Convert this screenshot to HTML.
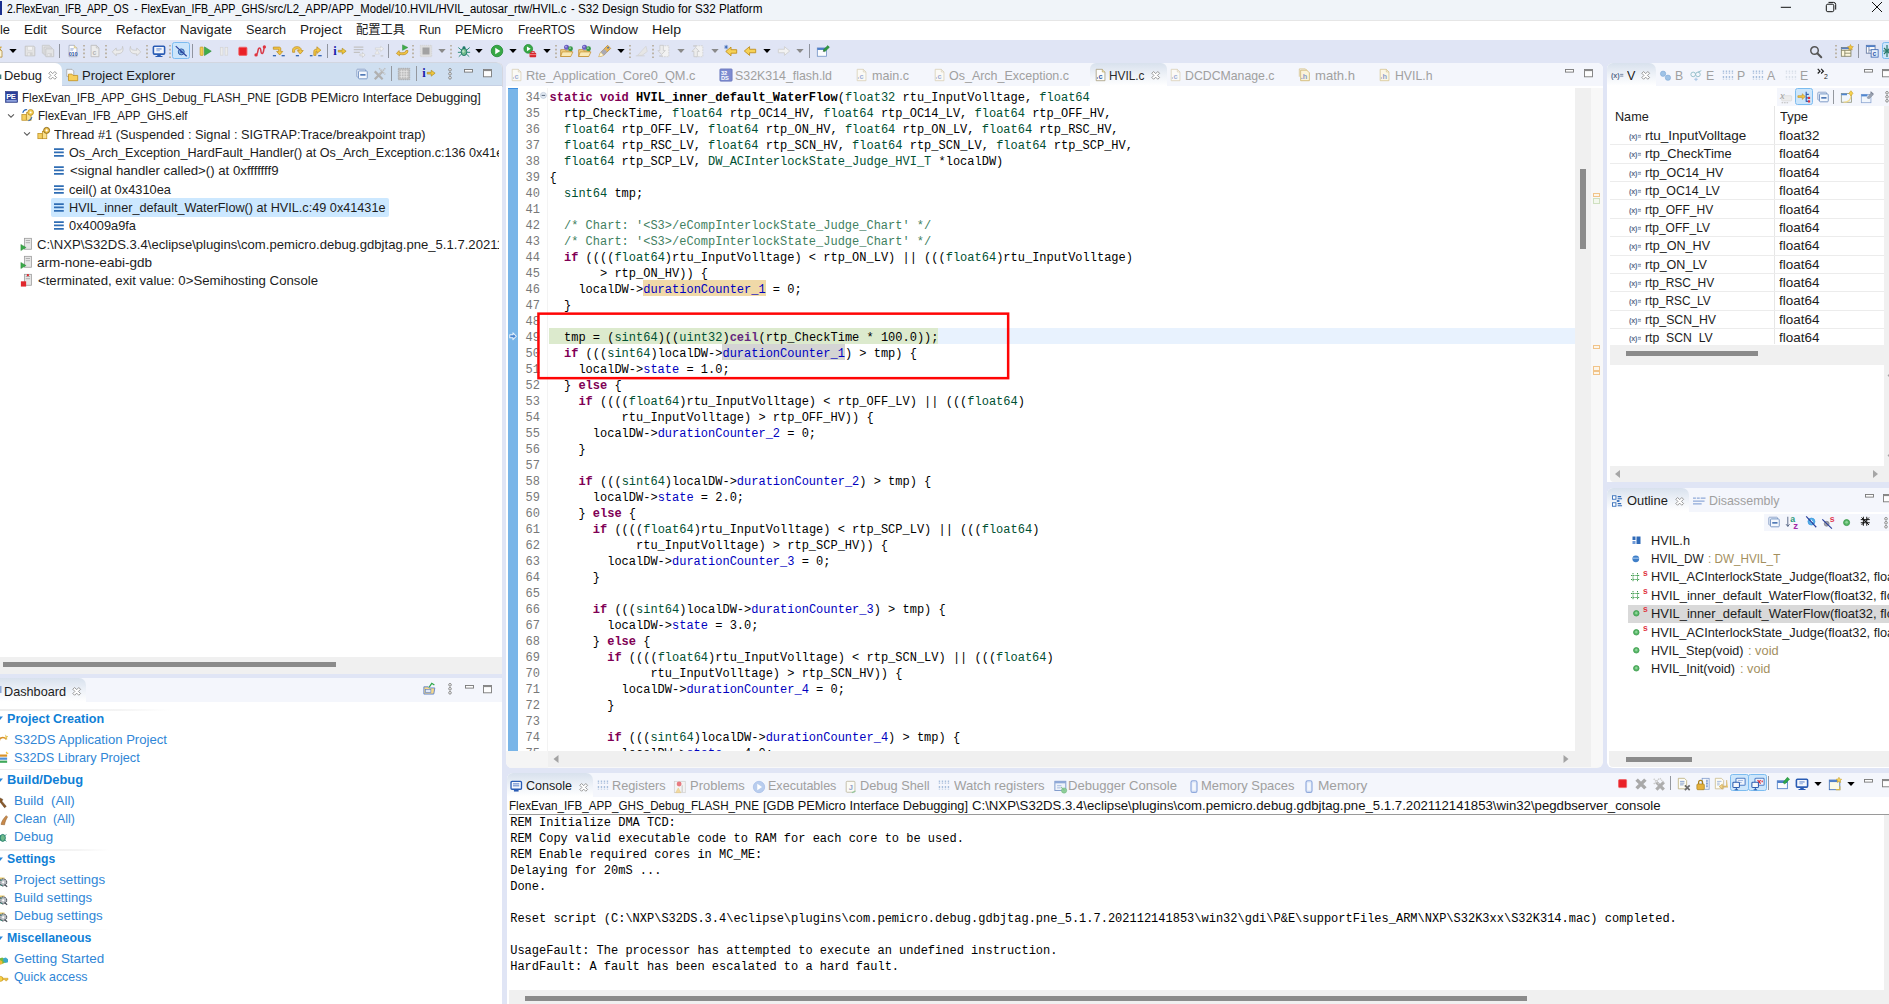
<!DOCTYPE html>
<html><head><meta charset="utf-8"><title>S32 Design Studio</title>
<style>
html,body{margin:0;padding:0;}
body{width:1889px;height:1004px;overflow:hidden;position:relative;background:#e0e5f5;}
body>div,body>span,body>svg{position:absolute;}
div{box-sizing:border-box;}
span.u{font-family:"Liberation Sans","Noto Sans CJK SC",sans-serif;white-space:pre;transform-origin:0 0;}
span.m{font-family:"Liberation Mono",monospace;white-space:pre;transform-origin:0 0;}
svg{overflow:visible;}

</style></head><body>
<div style="left:0px;top:0px;width:1889px;height:20.2px;background:#f0f4f9;"></div>
<div style="left:0px;top:20.2px;width:1889px;height:0.8px;background:#e6e6e6;"></div>
<div style="left:0px;top:21px;width:1889px;height:18.5px;background:#ffffff;"></div>
<div style="left:0px;top:39.5px;width:1889px;height:964.5px;background:#e0e5f5;"></div>
<div style="left:0px;top:1px;width:1.5px;height:14px;background:#1a2f8f;"></div>
<span class="u" style="left:7px;top:0.74px;font-size:12.3px;line-height:16px;color:#000;transform:scaleX(0.8471);">2.FlexEvan_IFB_APP_OS</span>
<span class="u" style="left:133.6px;top:0.74px;font-size:12.3px;line-height:16px;color:#000;transform:scaleX(0.9000);">-</span>
<span class="u" style="left:140.7px;top:0.74px;font-size:12.3px;line-height:16px;color:#000;transform:scaleX(0.8694);">FlexEvan_IFB_APP_GHS</span>
<span class="u" style="left:264.6px;top:0.74px;font-size:12.3px;line-height:16px;color:#000;transform:scaleX(0.9225);">/src/L2_APP/APP_Model/10.HVIL/HVIL_autosar_rtw/HVIL.c</span>
<span class="u" style="left:570.6px;top:0.74px;font-size:12.3px;line-height:16px;color:#000;transform:scaleX(0.9000);">-</span>
<span class="u" style="left:578px;top:0.74px;font-size:12.3px;line-height:16px;color:#000;transform:scaleX(0.9504);">S32 Design Studio for S32 Platform</span>
<svg style="left:1775px;top:0px;" width="20" height="20" viewBox="0 0 20 20"><path d="M5.800 7.300H16" stroke="#111" stroke-width="1" fill="none"/></svg>
<svg style="left:1820px;top:0px;" width="20" height="20" viewBox="0 0 20 20"><rect x="6.300" y="4.200" width="7.500" height="7.500" rx="1.500" stroke="#111" stroke-width="1" fill="none"/><path d="M8.500 2.400h5a2.200 2.200 0 0 1 2.200 2.200v5" stroke="#111" stroke-width="1" fill="none"/></svg>
<svg style="left:1865px;top:0px;" width="20" height="20" viewBox="0 0 20 20"><path d="M7 2L17 12M17 2L7 12" stroke="#111" stroke-width="1" fill="none"/></svg>
<span class="u" style="left:0px;top:20.86px;font-size:13.4px;line-height:17px;color:#1a1a1a;transform:scaleX(0.9581);">le</span>
<span class="u" style="left:24px;top:20.86px;font-size:13.4px;line-height:17px;color:#1a1a1a;transform:scaleX(0.9966);">Edit</span>
<span class="u" style="left:61px;top:20.86px;font-size:13.4px;line-height:17px;color:#1a1a1a;transform:scaleX(0.9661);">Source</span>
<span class="u" style="left:116px;top:20.86px;font-size:13.4px;line-height:17px;color:#1a1a1a;transform:scaleX(0.9880);">Refactor</span>
<span class="u" style="left:180px;top:20.86px;font-size:13.4px;line-height:17px;color:#1a1a1a;transform:scaleX(0.9837);">Navigate</span>
<span class="u" style="left:246px;top:20.86px;font-size:13.4px;line-height:17px;color:#1a1a1a;transform:scaleX(0.9426);">Search</span>
<span class="u" style="left:300px;top:20.86px;font-size:13.4px;line-height:17px;color:#1a1a1a;transform:scaleX(1.0075);">Project</span>
<span class="u" style="left:419px;top:20.86px;font-size:13.4px;line-height:17px;color:#1a1a1a;transform:scaleX(0.8951);">Run</span>
<span class="u" style="left:455px;top:20.86px;font-size:13.4px;line-height:17px;color:#1a1a1a;transform:scaleX(0.9484);">PEMicro</span>
<span class="u" style="left:518px;top:20.86px;font-size:13.4px;line-height:17px;color:#1a1a1a;transform:scaleX(0.8872);">FreeRTOS</span>
<span class="u" style="left:590px;top:20.86px;font-size:13.4px;line-height:17px;color:#1a1a1a;transform:scaleX(1.0075);">Window</span>
<span class="u" style="left:652px;top:20.86px;font-size:13.4px;line-height:17px;color:#1a1a1a;transform:scaleX(1.0528);">Help</span>
<span class="u" style="left:356px;top:21.77px;font-size:12.2px;line-height:16px;color:#1a1a1a;transform:scaleX(1.0051);">配置工具</span>
<div style="left:172px;top:42px;width:18px;height:17.3px;background:#cde6fb;border:1px solid #7cbcf0;border-radius:2.5px;"></div>
<svg style="left:174.0px;top:44px;" width="14.0" height="14.0" viewBox="0 0 16 16"><circle cx="8.300" cy="9" r="3.400" fill="#7fb0e0" stroke="#2c5aa8" stroke-width="1.100"/><circle cx="8.300" cy="9" r="1.300" fill="#2c5aa8"/><path d="M2 2.500L14.500 14" stroke="#2a3f9a" stroke-width="1.300"/></svg>
<svg style="left:-5.5px;top:44px;" width="14.0" height="14.0" viewBox="0 0 16 16"><path d="M-3 5h8l3 3v7H-3z" fill="#fdf6d8" stroke="#b08a3a" stroke-width=".9"/><path d="M4 1l1 2.300l2.500 .2l-1.900 1.600l.6 2.400L4 6.200" fill="#f3c644" stroke="#b98a1c" stroke-width=".6"/></svg>
<svg style="left:22.7px;top:44px;" width="14.0" height="14.0" viewBox="0 0 16 16"><path d="M2.5 2.5h10l1 1v10h-11z" fill="#e4e4e4" stroke="#c2c2c2"/><rect x="5" y="3" width="6" height="4" fill="#f4f4f4" stroke="#cfcfcf" stroke-width=".6"/><rect x="5" y="9.5" width="6" height="4" fill="#d2d2d2"/><rect x="6" y="10.5" width="1.6" height="2.5" fill="#f2f2f2"/></svg>
<svg style="left:41.0px;top:44px;" width="14.0" height="14.0" viewBox="0 0 16 16"><g opacity=".9"><path d="M1.5 1.5h8l1 1v8h-9z" fill="#e6e6e6" stroke="#c6c6c6"/><path d="M3.5 3.5h8l1 1v8h-9z" fill="#e6e6e6" stroke="#c6c6c6"/><path d="M5.5 5.5h8l1 1v8h-9z" fill="#e4e4e4" stroke="#c2c2c2"/><rect x="7.5" y="10.5" width="5" height="3.5" fill="#d0d0d0"/><rect x="8.3" y="11.3" width="1.4" height="2.3" fill="#f2f2f2"/></g></svg>
<svg style="left:65.9px;top:44px;" width="14.0" height="14.0" viewBox="0 0 16 16"><path d="M3.5 1.5h6l3 3v10h-9z" fill="#fdfdfd" stroke="#9fa8bd" stroke-width=".9"/><path d="M9.5 1.5v3h3" fill="#f3e6b8" stroke="#c9b36a" stroke-width=".7"/><path d="M5 5.5h4M5 7h3" stroke="#7a94c8" stroke-width=".8"/><text x="3.2" y="13.4" font-size="6.3" font-family="Liberation Sans,sans-serif" font-weight="700" fill="#2b4fa0" letter-spacing="-.3">010</text></svg>
<svg style="left:87.9px;top:44px;" width="14.0" height="14.0" viewBox="0 0 16 16"><path d="M3.5 1.5h6l3 3v10h-9z" fill="#ececec" stroke="#bdbdbd"/><path d="M9.5 1.5v3h3" fill="none" stroke="#bdbdbd" stroke-width=".8"/><text x="5" y="12.6" font-size="8" font-family="Liberation Sans,sans-serif" font-weight="700" fill="#b6b6b6">c</text></svg>
<svg style="left:110.6px;top:44px;" width="14.0" height="14.0" viewBox="0 0 16 16"><path d="M1.5 9L6 4.5v2.6c4 0 7 .2 7.2-4.4C15.5 10 10.500 11.500 6 11.200v2.300z" fill="#ececec" stroke="#c4c4c4" stroke-width=".9" stroke-linejoin="round"/></svg>
<svg style="left:128.0px;top:44px;" width="14.0" height="14.0" viewBox="0 0 16 16"><path d="M14.5 9L10 4.5v2.6c-4 0-7 .2-7.2-4.4C.5 10 5.500 11.500 10 11.200v2.300z" fill="#ececec" stroke="#c4c4c4" stroke-width=".9" stroke-linejoin="round"/></svg>
<svg style="left:151.5px;top:44px;" width="14.0" height="14.0" viewBox="0 0 16 16"><rect x="1.600" y="2.600" width="12.800" height="9" rx="1.200" fill="#f4f7fc" stroke="#2a5cb4" stroke-width="1.800"/><rect x="5" y="5" width="6" height="1.300" fill="#6a8fd0"/><rect x="5" y="7" width="4" height="1.300" fill="#9db6e2"/><path d="M6 12.300h4v1.300h2v1.200H4v-1.200h2z" fill="#2a5cb4"/></svg>
<svg style="left:198.6px;top:44px;" width="14.0" height="14.0" viewBox="0 0 16 16"><rect x="1.300" y="3.500" width="3.400" height="9.500" rx=".6" fill="#f2cd52" stroke="#c39a22" stroke-width=".8"/><path d="M6.300 3.300L14 8.200L6.300 13.200Z" fill="#3fae49" stroke="#2b8a35" stroke-width=".7" stroke-linejoin="round"/></svg>
<svg style="left:217.0px;top:44px;" width="14.0" height="14.0" viewBox="0 0 16 16"><rect x="3.800" y="3.800" width="3" height="9" fill="#ececec" stroke="#d4d4d4" stroke-width=".8"/><rect x="9.200" y="3.800" width="3" height="9" fill="#ececec" stroke="#d4d4d4" stroke-width=".8"/></svg>
<svg style="left:235.6px;top:44px;" width="14.0" height="14.0" viewBox="0 0 16 16"><rect x="3.200" y="3.700" width="9.300" height="9.300" rx="1" fill="#ea2127" stroke="#f0666a" stroke-width="1"/></svg>
<svg style="left:253.4px;top:44px;" width="14.0" height="14.0" viewBox="0 0 16 16"><path d="M4 12.500C6.500 9 5 4.500 7.500 4.500C10 4.500 8 11 10.500 11C12.500 10.500 12 6 13 3.500" fill="none" stroke="#d83a48" stroke-width="1.700"/><circle cx="3.500" cy="12.500" r="1.900" fill="#e0343f"/><circle cx="13" cy="3.300" r="1.900" fill="#e0343f"/></svg>
<svg style="left:272.4px;top:44px;" width="14.0" height="14.0" viewBox="0 0 16 16"><path d="M1.500 3.500h6.500c1.500 0 2 .8 2 2v3h2.300L8.800 12.600L5.300 8.500h2.300v-2.500h-6.100z" fill="#f3c644" stroke="#b98a1c" stroke-width=".8" stroke-linejoin="round"/><rect x="1" y="12.600" width="3.600" height="1.500" fill="#3465b4"/><rect x="11" y="12.600" width="3.600" height="1.500" fill="#3465b4"/></svg>
<svg style="left:291.0px;top:44px;" width="14.0" height="14.0" viewBox="0 0 16 16"><path d="M1.800 9.500v-2.500c0-2.500 2-4 5-4c3 0 5 1.500 5 4v.5h2.200L10.600 11.500L7.200 7.500h2.200c0-1.300-1-2-2.600-2c-1.600 0-2.600 .800-2.600 2v2z" fill="#f3c644" stroke="#b98a1c" stroke-width=".8" stroke-linejoin="round"/><rect x="5.500" y="12.600" width="3.600" height="1.500" fill="#3465b4"/></svg>
<svg style="left:309.0px;top:44px;" width="14.0" height="14.0" viewBox="0 0 16 16"><path d="M5.500 13v-4.500c0-1.500 1-2.500 2.500-2.500h1v-2.800L13.600 7L9 10.800v-2.600h-1v4.800z" fill="#f3c644" stroke="#b98a1c" stroke-width=".8" stroke-linejoin="round"/><rect x="1" y="12.600" width="3" height="1.500" fill="#3465b4"/><rect x="10.500" y="12.600" width="4" height="1.500" fill="#3465b4"/></svg>
<svg style="left:333.0px;top:44px;" width="14.0" height="14.0" viewBox="0 0 16 16"><text x=".3" y="13" font-size="14" font-family="Liberation Serif,serif" font-weight="700" fill="#1a1aa8">i</text><path d="M6 7.200h4.500v-2.400L15 8.200L10.500 11.600v-2.400H6z" fill="#f0c63c" stroke="#a88516" stroke-width=".7" stroke-linejoin="round"/></svg>
<svg style="left:352.0px;top:44px;" width="14.0" height="14.0" viewBox="0 0 16 16"><path d="M2 3.500h11M2 6.500h11M2 9.500h7" stroke="#c2c2c2" stroke-width="1.400"/><path d="M9 11.500h3v-1.800l3 2.800l-3 2.800v-1.800h-3z" fill="#f0f0f0" stroke="#c6c6c6" stroke-width=".7"/></svg>
<svg style="left:370.5px;top:44px;" width="14.0" height="14.0" viewBox="0 0 16 16"><path d="M5 4.500h6v-2l3.500 3l-3.500 3v-2H5z" fill="#f2f2f2" stroke="#cdcdcd" stroke-width=".7"/><path d="M7 6.500l2.500 5h-5z" fill="#eee" stroke="#d0d0d0" stroke-width=".6"/><path d="M1.500 13.500h3M11 13.500h3" stroke="#c6c6c6" stroke-width="1.300"/></svg>
<svg style="left:395.8px;top:44px;" width="14.0" height="14.0" viewBox="0 0 16 16"><path d="M3.500 7.500l-3 3.300l3.600 2.700v-1.700c5 1.200 9.500 .3 9.600-4.300h-2.400c-.2 2.600-3.400 2.900-7.400 2.300z" fill="#f3c644" stroke="#b98a1c" stroke-width=".8" stroke-linejoin="round"/><path d="M7.500 1L13.500 4L7.500 7.200Z" fill="#3fae49" stroke="#2b8a35" stroke-width=".6"/></svg>
<svg style="left:418.5px;top:44px;" width="14.0" height="14.0" viewBox="0 0 16 16"><rect x="1.500" y="1.500" width="13" height="13" fill="#dedede" stroke="#d0d0d0" stroke-dasharray="1.200 1"/><rect x="4" y="4" width="8" height="8" fill="#a2a2a2"/></svg>
<svg style="left:456.6px;top:44px;" width="14.0" height="14.0" viewBox="0 0 16 16"><ellipse cx="8" cy="9" rx="3.300" ry="4.200" fill="#6fb98a" stroke="#1f7a6a" stroke-width="1.100"/><circle cx="8" cy="4.300" r="1.700" fill="#1f7a6a"/><path d="M1.500 4l3.500 3M14.500 4l-3.500 3M1 9.500h3.700M15 9.500h-3.700M2 14.500l3.200-3M14 14.500l-3.200-3" stroke="#2a8a78" stroke-width="1.100"/><ellipse cx="7.300" cy="8.300" rx="1.300" ry="1.800" fill="#c9ecd2" opacity=".8"/></svg>
<svg style="left:489.5px;top:44px;" width="14.0" height="14.0" viewBox="0 0 16 16"><circle cx="8" cy="8" r="6.600" fill="#37a845" stroke="#1f8a32" stroke-width=".9"/><path d="M6 4.300L11.800 8L6 11.700Z" fill="#fff"/></svg>
<svg style="left:523.2px;top:44px;" width="14.0" height="14.0" viewBox="0 0 16 16"><circle cx="6" cy="5.500" r="5" fill="#37a845" stroke="#1f8a32" stroke-width=".8"/><path d="M4.500 2.800L8.800 5.500L4.500 8.200Z" fill="#fff"/><rect x="7.500" y="10" width="7.500" height="5" rx=".8" fill="#d8252b"/><path d="M9.500 10v-1.300h3.500v1.300" fill="none" stroke="#d8252b" stroke-width="1.100"/><rect x="7.500" y="11.800" width="7.500" height=".9" fill="#f3a0a3"/></svg>
<svg style="left:559.8px;top:44px;" width="14.0" height="14.0" viewBox="0 0 16 16"><path d="M.8 6.500h5l1 1.300h6.500l-1.500 6.500H.8z" fill="#f6d88a" stroke="#c08a2a" stroke-width=".9" stroke-linejoin="round"/><path d="M2.500 9h12.300l-2.500 5.300H.8z" fill="#fae9b5" stroke="#c08a2a" stroke-width=".8" stroke-linejoin="round"/><circle cx="7.500" cy="3.800" r="2.900" fill="#6a5fc0"/><circle cx="6.800" cy="3" r="1" fill="#b5aee8"/><circle cx="12" cy="5.500" r="2.800" fill="#3a9a4a"/><circle cx="11.400" cy="4.700" r="1" fill="#a5dcae"/></svg>
<svg style="left:578.3px;top:44px;" width="14.0" height="14.0" viewBox="0 0 16 16"><path d="M.8 6.500h5l1 1.300h6.500l-1.500 6.500H.8z" fill="#f6d88a" stroke="#c08a2a" stroke-width=".9" stroke-linejoin="round"/><path d="M2.500 9h12.300l-2.500 5.300H.8z" fill="#fae9b5" stroke="#c08a2a" stroke-width=".8" stroke-linejoin="round"/><circle cx="7.500" cy="3.800" r="2.900" fill="#6a5fc0"/><circle cx="6.800" cy="3" r="1" fill="#b5aee8"/><circle cx="12" cy="5.500" r="2.800" fill="#3a9a4a"/><circle cx="11.400" cy="4.700" r="1" fill="#a5dcae"/></svg>
<svg style="left:597.5px;top:44px;" width="14.0" height="14.0" viewBox="0 0 16 16"><path d="M1 14.500l2-5L11 1.500l3.500 3.500L6.500 13z" fill="#e8b85a" stroke="#b5852a" stroke-width=".8" stroke-linejoin="round"/><path d="M3 9.500l4-4l3.500 3.500l-4 4z" fill="#a9a9b5"/><path d="M1 14.500l2-5l3.500 3.500z" fill="#fff8dc" stroke="#d8c27a" stroke-width=".5"/><circle cx="11.500" cy="4.200" r="1" fill="#3a6ab8"/></svg>
<svg style="left:634.6px;top:44px;" width="14.0" height="14.0" viewBox="0 0 16 16"><path d="M1 13.500h10" stroke="#d0d0d0" stroke-width="1"/><path d="M3 13L12.500 2.500l1.500 6L8 13z" fill="#e6e6e6" stroke="#cfcfcf" stroke-width=".7"/></svg>
<svg style="left:657.3px;top:44px;" width="14.0" height="14.0" viewBox="0 0 16 16"><path d="M5.500 2h8v12.500h-8" fill="#f2f2f2" stroke="#cccccc" stroke-width=".8" stroke-dasharray="2 1"/><path d="M3.300 1.500h4v6h2.200L5.300 12L1.100 7.500h2.200z" fill="#ececec" stroke="#c4c4c4" stroke-width=".8" stroke-linejoin="round"/><rect x="2.500" y="13" width="4" height="1.500" fill="#c8c8c8"/></svg>
<svg style="left:691.3px;top:44px;" width="14.0" height="14.0" viewBox="0 0 16 16"><path d="M5.500 2h8v12.500h-8" fill="#f2f2f2" stroke="#cccccc" stroke-width=".8" stroke-dasharray="2 1"/><path d="M3.300 14.500h4v-6h2.200L5.300 4L1.100 8.500h2.200z" fill="#ececec" stroke="#c4c4c4" stroke-width=".8" stroke-linejoin="round"/><rect x="2.500" y="1.500" width="4" height="1.500" fill="#c8c8c8"/></svg>
<svg style="left:724.4px;top:44px;" width="14.0" height="14.0" viewBox="0 0 16 16"><path d="M2 8.500L8 3.500v3h6.500v4H8v3z" fill="#f6d257" stroke="#c08f1c" stroke-width="1" stroke-linejoin="round"/><path d="M2.500 1v5M.3 3.500h4.500M1 1.800l3 3.400M4 1.800l-3 3.400" stroke="#2f5fb0" stroke-width=".8"/></svg>
<svg style="left:742.7px;top:44px;" width="14.0" height="14.0" viewBox="0 0 16 16"><path d="M1.500 8L7.500 3v3h7v4h-7v3z" fill="#f6d257" stroke="#c08f1c" stroke-width="1" stroke-linejoin="round"/></svg>
<svg style="left:776.7px;top:44px;" width="14.0" height="14.0" viewBox="0 0 16 16"><path d="M14.500 8L8.500 3v3h-7v4h7v3z" fill="#f2f2f2" stroke="#cfcfcf" stroke-width="1" stroke-linejoin="round"/></svg>
<svg style="left:816.0px;top:44px;" width="14.0" height="14.0" viewBox="0 0 16 16"><rect x="1.500" y="4.500" width="10.500" height="9.500" fill="#fbfcfe" stroke="#6d8fc4" stroke-width=".9"/><rect x="1.500" y="4.500" width="10.500" height="2.300" fill="#4f7fc8"/><path d="M8 7l5.500-5.200l1.800 2L10 8.800z" fill="#2f9a3f" stroke="#1f7a2f" stroke-width=".6"/><path d="M8 9l1.500-1.500" stroke="#444" stroke-width=".9"/></svg>
<div style="left:59.0px;top:44px;width:1.2px;height:14px;background:#90949f;"></div>
<div style="left:191.70000000000002px;top:44px;width:1.2px;height:14px;background:#90949f;"></div>
<div style="left:326.9px;top:44px;width:1.2px;height:14px;background:#90949f;"></div>
<div style="left:388.09999999999997px;top:44px;width:1.2px;height:14px;background:#90949f;"></div>
<div style="left:808.9px;top:44px;width:1.2px;height:14px;background:#90949f;"></div>
<svg style="left:83px;top:45px;" width="2" height="13" viewBox="0 0 2 13"><path d="M1 0V13" stroke="#b0a48e" stroke-width="1.5" stroke-dasharray="1.6 2.2"/></svg>
<svg style="left:105.2px;top:45px;" width="2" height="13" viewBox="0 0 2 13"><path d="M1 0V13" stroke="#b0a48e" stroke-width="1.5" stroke-dasharray="1.6 2.2"/></svg>
<svg style="left:146px;top:45px;" width="2" height="13" viewBox="0 0 2 13"><path d="M1 0V13" stroke="#b0a48e" stroke-width="1.5" stroke-dasharray="1.6 2.2"/></svg>
<svg style="left:168.5px;top:45px;" width="2" height="13" viewBox="0 0 2 13"><path d="M1 0V13" stroke="#b0a48e" stroke-width="1.5" stroke-dasharray="1.6 2.2"/></svg>
<svg style="left:412.3px;top:45px;" width="2" height="13" viewBox="0 0 2 13"><path d="M1 0V13" stroke="#b0a48e" stroke-width="1.5" stroke-dasharray="1.6 2.2"/></svg>
<svg style="left:450px;top:45px;" width="2" height="13" viewBox="0 0 2 13"><path d="M1 0V13" stroke="#b0a48e" stroke-width="1.5" stroke-dasharray="1.6 2.2"/></svg>
<svg style="left:555px;top:45px;" width="2" height="13" viewBox="0 0 2 13"><path d="M1 0V13" stroke="#b0a48e" stroke-width="1.5" stroke-dasharray="1.6 2.2"/></svg>
<svg style="left:629.2px;top:45px;" width="2" height="13" viewBox="0 0 2 13"><path d="M1 0V13" stroke="#b0a48e" stroke-width="1.5" stroke-dasharray="1.6 2.2"/></svg>
<svg style="left:651.6px;top:45px;" width="2" height="13" viewBox="0 0 2 13"><path d="M1 0V13" stroke="#b0a48e" stroke-width="1.5" stroke-dasharray="1.6 2.2"/></svg>
<svg style="left:8.8px;top:48.3px;" width="8" height="6" viewBox="0 0 8 6"><path d="M0.2999999999999998 0.8999999999999999H7.7L4 5.1Z" fill="#000"/></svg>
<svg style="left:437.8px;top:48.3px;" width="8" height="6" viewBox="0 0 8 6"><path d="M0.2999999999999998 0.8999999999999999H7.7L4 5.1Z" fill="#8a8a8a"/></svg>
<svg style="left:475.4px;top:48.3px;" width="8" height="6" viewBox="0 0 8 6"><path d="M0.2999999999999998 0.8999999999999999H7.7L4 5.1Z" fill="#000"/></svg>
<svg style="left:508.9px;top:48.3px;" width="8" height="6" viewBox="0 0 8 6"><path d="M0.2999999999999998 0.8999999999999999H7.7L4 5.1Z" fill="#000"/></svg>
<svg style="left:542.7px;top:48.3px;" width="8" height="6" viewBox="0 0 8 6"><path d="M0.2999999999999998 0.8999999999999999H7.7L4 5.1Z" fill="#000"/></svg>
<svg style="left:617px;top:48.3px;" width="8" height="6" viewBox="0 0 8 6"><path d="M0.2999999999999998 0.8999999999999999H7.7L4 5.1Z" fill="#000"/></svg>
<svg style="left:676.8px;top:48.3px;" width="8" height="6" viewBox="0 0 8 6"><path d="M0.2999999999999998 0.8999999999999999H7.7L4 5.1Z" fill="#8a8a8a"/></svg>
<svg style="left:710.6px;top:48.3px;" width="8" height="6" viewBox="0 0 8 6"><path d="M0.2999999999999998 0.8999999999999999H7.7L4 5.1Z" fill="#8a8a8a"/></svg>
<svg style="left:762.6px;top:48.3px;" width="8" height="6" viewBox="0 0 8 6"><path d="M0.2999999999999998 0.8999999999999999H7.7L4 5.1Z" fill="#000"/></svg>
<svg style="left:796.2px;top:48.3px;" width="8" height="6" viewBox="0 0 8 6"><path d="M0.2999999999999998 0.8999999999999999H7.7L4 5.1Z" fill="#8a8a8a"/></svg>
<svg style="left:1809.2px;top:44.5px;" width="14.0" height="14.0" viewBox="0 0 16 16"><circle cx="6.300" cy="6.300" r="4.300" fill="none" stroke="#555" stroke-width="1.700"/><path d="M9.500 9.500L14 14" stroke="#555" stroke-width="2.300" stroke-linecap="round"/></svg>
<svg style="left:1834.7px;top:45px;" width="2" height="13" viewBox="0 0 2 13"><path d="M1 0V13" stroke="#b0a48e" stroke-width="1.5" stroke-dasharray="1.6 2.2"/></svg>
<svg style="left:1840px;top:44px;" width="14.0" height="14.0" viewBox="0 0 16 16"><rect x="1.500" y="4" width="11" height="10" fill="#fdf7dc" stroke="#7a7a5a" stroke-width=".9"/><path d="M1.500 7.300h11M5.500 7.300v6.700M5.500 10.500h7" stroke="#7a7a5a" stroke-width=".9"/><rect x="1.500" y="4" width="11" height="2" fill="#5a7fc0"/><path d="M12 .5l1 2.200l2.300 .3l-1.700 1.600l.4 2.300L12 5.800L10 6.900l.4-2.300L8.700 3l2.300-.3z" fill="#f5c73d" stroke="#b98a1c" stroke-width=".5"/></svg>
<div style="left:1858.0px;top:44px;width:1.2px;height:14px;background:#90949f;"></div>
<svg style="left:1865.2px;top:44px;" width="14.0" height="14.0" viewBox="0 0 16 16"><rect x="1.500" y="1.500" width="10" height="9" fill="#fdfdfd" stroke="#5a6f9a" stroke-width=".9"/><rect x="1.500" y="1.500" width="10" height="2" fill="#4f7fc8"/><path d="M4.500 3.500v7M4.500 7h7" stroke="#5a6f9a" stroke-width=".8"/><rect x="7" y="6.500" width="8" height="8.500" fill="#e9f0fb" stroke="#2f5fb0" stroke-width=".9"/><text x="8.700" y="13.800" font-size="8" font-family="Liberation Sans,sans-serif" font-weight="700" fill="#2f5fb0">c</text></svg>
<div style="left:1881.6px;top:42px;width:13.4px;height:17.3px;background:#cde6fb;border:1px solid #7cbcf0;border-radius:2.5px;"></div>
<svg style="left:1884px;top:43px;" width="16" height="16" viewBox="0 0 16 16"><path d="M3 2v12M0 5l6 6M6 5l-6 6M-1 8h8" stroke="#2a7a6a" stroke-width="1.200"/></svg>
<div style="left:0px;top:62.3px;width:502.6px;height:611.7px;background:#ffffff;border-radius:0 6px 0 0;border-right:1px solid #d4d7e0;"></div>
<div style="left:0px;top:62.3px;width:502.4px;height:23.9px;background:#cfdff0;border-radius:0 6px 0 0;border-top:1px solid #d2d6e0;border-bottom:1px solid #c5d0e4;"></div>
<div style="left:0px;top:62.5px;width:62px;height:24.0px;background:#ffffff;border-radius:0 7px 0 0;"></div>
<span class="u" style="left:4px;top:66.93px;font-size:13.2px;line-height:17px;color:#1c1c1c;transform:scaleX(0.9775);">Debug</span>
<span class="u" style="left:82px;top:66.93px;font-size:13.2px;line-height:17px;color:#1c1c1c;transform:scaleX(0.9912);">Project Explorer</span>
<div style="left:51px;top:198.2px;width:338.2px;height:18.7px;background:#cce8ff;border-radius:2px;"></div>
<span class="u" style="left:22px;top:89.83px;font-size:12.6px;line-height:16px;color:#1c1c1c;transform:scaleX(0.9215);">FlexEvan_IFB_APP_GHS_Debug_FLASH_PNE</span>
<span class="u" style="left:275.6px;top:89.83px;font-size:12.6px;line-height:16px;color:#1c1c1c;transform:scaleX(1.0129);">[GDB PEMicro Interface Debugging]</span>
<span class="u" style="left:38px;top:108.18px;font-size:12.6px;line-height:16px;color:#1c1c1c;transform:scaleX(0.9206);">FlexEvan_IFB_APP_GHS.elf</span>
<span class="u" style="left:54px;top:126.53px;font-size:12.6px;line-height:16px;color:#1c1c1c;transform:scaleX(1.0121);">Thread #1 (Suspended : Signal : SIGTRAP:Trace/breakpoint trap)</span>
<span class="u" style="left:69px;top:144.88px;font-size:12.6px;line-height:16px;color:#1c1c1c;transform:scaleX(1.0007);">Os_Arch_Exception_HardFault_Handler() at Os_Arch_Exception.c:136 0x41e8c2</span>
<span class="u" style="left:70px;top:163.23px;font-size:12.6px;line-height:16px;color:#1c1c1c;transform:scaleX(1.0485);">&lt;signal handler called&gt;() at 0xfffffff9</span>
<span class="u" style="left:69px;top:181.58px;font-size:12.6px;line-height:16px;color:#1c1c1c;transform:scaleX(1.0187);">ceil() at 0x4310ea</span>
<span class="u" style="left:69px;top:199.93px;font-size:12.6px;line-height:16px;color:#1c1c1c;transform:scaleX(1.0062);">HVIL_inner_default_WaterFlow() at HVIL.c:49 0x41431e</span>
<span class="u" style="left:69px;top:218.28px;font-size:12.6px;line-height:16px;color:#1c1c1c;transform:scaleX(1.0176);">0x4009a9fa</span>
<span class="u" style="left:37px;top:236.63px;font-size:12.6px;line-height:16px;color:#1c1c1c;transform:scaleX(1.0408);">C:\NXP\S32DS.3.4\eclipse\plugins\com.pemicro.debug.gdbjtag.pne_5.1.7.202112141853\win32\pegdbserver_console</span>
<span class="u" style="left:37px;top:254.98px;font-size:12.6px;line-height:16px;color:#1c1c1c;transform:scaleX(1.0737);">arm-none-eabi-gdb</span>
<span class="u" style="left:38px;top:273.33px;font-size:12.6px;line-height:16px;color:#1c1c1c;transform:scaleX(1.0470);">&lt;terminated, exit value: 0&gt;Semihosting Console</span>
<div style="left:498.5px;top:86.5px;width:3.5px;height:569.5px;background:#ffffff;"></div>
<div style="left:502px;top:86.5px;width:4.5px;height:587.5px;background:#e0e5f5;"></div>
<div style="left:0px;top:656.5px;width:502px;height:17.5px;background:#f0f0f0;"></div>
<div style="left:3px;top:662px;width:333px;height:5px;background:#8b8b8b;"></div>
<svg style="left:48.1px;top:70.8px;" width="9.4" height="8.8" viewBox="0 0 10 10"><path d="M.6 2.600L2.600 .6L5 3L7.400 .6L9.400 2.600L7 5L9.400 7.400L7.400 9.400L5 7L2.600 9.400L.6 7.400L3 5Z" fill="#ffffff" stroke="#858585" stroke-width=".95" stroke-linejoin="round"/></svg>
<svg style="left:65px;top:67.5px;" width="14.0" height="14.0" viewBox="0 0 16 16"><path d="M2 1.500h6l2 2v6H2z" fill="#fbfbfb" stroke="#9a9a9a" stroke-width=".8"/><path d="M4 7h4l1.200 1.500h5.300v6H4z" fill="#f7cf5a" stroke="#c08f1c" stroke-width=".9" stroke-linejoin="round"/></svg>
<svg style="left:354.5px;top:66.6px;" width="14.0" height="14.0" viewBox="0 0 16 16"><rect x="2" y="2.500" width="10" height="9" rx="1" fill="#dfe9f7" stroke="#8ea4c8" stroke-width="1"/><rect x="4" y="4.500" width="10" height="9" rx="1" fill="#f4f8fd" stroke="#6f8fc0" stroke-width="1"/><path d="M6 9h6" stroke="#2f5fa8" stroke-width="1.600"/></svg>
<svg style="left:373px;top:66.6px;" width="14.0" height="14.0" viewBox="0 0 16 16"><path d="M2 5l9 9M11 5l-9 9" stroke="#b0b0b0" stroke-width="2.600"/><path d="M7 1.500l7 7M14 1.500l-7 7" stroke="#bebebe" stroke-width="1.800" stroke-dasharray="1.500 .7"/></svg>
<div style="left:390.9px;top:66px;width:1.2px;height:14.5px;background:#94989f;"></div>
<svg style="left:397.3px;top:66.6px;" width="14.0" height="14.0" viewBox="0 0 16 16"><rect x="1.500" y="1.500" width="13" height="13" fill="#bdbdbd" stroke="#a8a8a8" stroke-dasharray="1.500 1"/><path d="M3 5h10M3 8h10M3 11h10M5 3v10M8 3v10M11 3v10" stroke="#e4e4e4" stroke-width=".9"/></svg>
<div style="left:415.7px;top:66px;width:1.2px;height:14.5px;background:#94989f;"></div>
<svg style="left:422px;top:66.3px;" width="14.0" height="14.0" viewBox="0 0 16 16"><text x=".3" y="13" font-size="14" font-family="Liberation Serif,serif" font-weight="700" fill="#1a1aa8">i</text><path d="M6 7.200h4.500v-2.400L15 8.200L10.500 11.600v-2.400H6z" fill="#f0c63c" stroke="#a88516" stroke-width=".7" stroke-linejoin="round"/></svg>
<svg style="left:448px;top:67.6px;" width="4" height="11.6" viewBox="0 0 4 11.600"><circle cx="2" cy="1.800" r="1.300" fill="#fff" stroke="#6e6e6e" stroke-width=".8"/><circle cx="2" cy="5.800" r="1.300" fill="#fff" stroke="#6e6e6e" stroke-width=".8"/><circle cx="2" cy="9.800" r="1.300" fill="#fff" stroke="#6e6e6e" stroke-width=".8"/></svg>
<svg style="left:464px;top:69px;" width="9" height="3.6" viewBox="0 0 9 3.600"><rect x=".5" y=".5" width="8" height="2.600" fill="#fdfdfd" stroke="#777" stroke-width=".9"/></svg>
<svg style="left:483px;top:69px;" width="9" height="8.3" viewBox="0 0 9 8.300"><rect x=".5" y=".5" width="8" height="7.300" fill="#fdfdfd" stroke="#7a7a7a" stroke-width=".9"/><rect x=".5" y=".5" width="8" height="1.600" fill="#8a8a8a"/></svg>
<svg style="left:4.6px;top:91.1px;" width="13.1" height="11.8" viewBox="0 0 15.500 14"><rect x=".5" y=".5" width="14.500" height="13" fill="#2a3f9a" stroke="#1d2c78" stroke-width=".6"/><text x="1.500" y="9.300" font-size="9" font-family="Liberation Sans,sans-serif" font-weight="700" fill="#fff" letter-spacing="-.6">PE</text><rect x="1.500" y="10.500" width="12.500" height="2.300" fill="#8fa2dc"/></svg>
<svg style="left:6.8px;top:113.1px;" width="8" height="5.5" viewBox="0 0 9 6.500"><path d="M1 1.500L4.500 5L8 1.500" fill="none" stroke="#5a5a5a" stroke-width="1.200"/></svg>
<svg style="left:20.5px;top:108.4px;" width="14.0" height="14.0" viewBox="0 0 16 16"><rect x="1" y="7.500" width="5" height="6.500" fill="#f5cf60" stroke="#b98a1c" stroke-width=".8"/><rect x="6.500" y="5" width="5" height="9" fill="#f9e08f" stroke="#b98a1c" stroke-width=".8"/><circle cx="11" cy="5" r="3.300" fill="#f6cf55" stroke="#b98a1c" stroke-width=".9"/><circle cx="11" cy="5" r="1.100" fill="#fff"/><path d="M2 5.500c1-3 3-4 5-3.500M12.500 10.500c-.5 2-2 3.500-4 4" fill="none" stroke="#2f6ab8" stroke-width="1.200"/></svg>
<svg style="left:23.3px;top:131.4px;" width="8" height="5.5" viewBox="0 0 9 6.500"><path d="M1 1.500L4.500 5L8 1.500" fill="none" stroke="#5a5a5a" stroke-width="1.200"/></svg>
<svg style="left:36.8px;top:126.4px;" width="14.0" height="14.0" viewBox="0 0 16 16"><rect x="1" y="8.500" width="5" height="6" fill="#f5cf60" stroke="#b98a1c" stroke-width=".8"/><rect x="6.200" y="6" width="5" height="8.500" fill="#f9e08f" stroke="#b98a1c" stroke-width=".8"/><circle cx="11" cy="5" r="3.400" fill="#f1c24a" stroke="#8a6a1a" stroke-width="1.100"/><circle cx="11" cy="5" r="1.200" fill="#fff"/></svg>
<svg style="left:54px;top:147.9px;" width="9.8" height="8.9" viewBox="0 0 11 10"><path d="M0 1.200h11M0 5h11M0 8.800h11" stroke="#2f6db4" stroke-width="1.900"/></svg>
<svg style="left:54px;top:166.3px;" width="9.8" height="8.9" viewBox="0 0 11 10"><path d="M0 1.200h11M0 5h11M0 8.800h11" stroke="#2f6db4" stroke-width="1.900"/></svg>
<svg style="left:54px;top:184.7px;" width="9.8" height="8.9" viewBox="0 0 11 10"><path d="M0 1.200h11M0 5h11M0 8.800h11" stroke="#2f6db4" stroke-width="1.900"/></svg>
<svg style="left:54px;top:203.0px;" width="9.8" height="8.9" viewBox="0 0 11 10"><path d="M0 1.200h11M0 5h11M0 8.800h11" stroke="#2f6db4" stroke-width="1.900"/></svg>
<svg style="left:54px;top:221.3px;" width="9.8" height="8.9" viewBox="0 0 11 10"><path d="M0 1.200h11M0 5h11M0 8.800h11" stroke="#2f6db4" stroke-width="1.900"/></svg>
<svg style="left:19.8px;top:236.6px;" width="14.0" height="14.0" viewBox="0 0 16 16"><rect x="5" y="1.500" width="8" height="12.500" fill="#e6e6e6" stroke="#9a9a9a" stroke-width=".9"/><path d="M6.500 4h5M6.500 6.500h5" stroke="#a8a8a8" stroke-width="1"/><path d="M1 8.500L7 12L1 15.500Z" fill="#3aa84a" stroke="#2b8a35" stroke-width=".5"/></svg>
<svg style="left:19.8px;top:254.9px;" width="14.0" height="14.0" viewBox="0 0 16 16"><rect x="5" y="1.500" width="8" height="12.500" fill="#e6e6e6" stroke="#9a9a9a" stroke-width=".9"/><path d="M6.500 4h5M6.500 6.500h5" stroke="#a8a8a8" stroke-width="1"/><path d="M1 8.500L7 12L1 15.500Z" fill="#3aa84a" stroke="#2b8a35" stroke-width=".5"/></svg>
<svg style="left:19.8px;top:273.3px;" width="14.0" height="14.0" viewBox="0 0 16 16"><rect x="5" y="1.500" width="8" height="12.500" fill="#e6e6e6" stroke="#9a9a9a" stroke-width=".9"/><path d="M6.500 4h5M6.500 6.500h5" stroke="#a8a8a8" stroke-width="1"/><rect x="1" y="9.500" width="6" height="6" fill="#e0272d"/><circle cx="9" cy="2.500" r="1.300" fill="#e0272d"/></svg>
<svg style="left:0px;top:73px;" width="3" height="8" viewBox="0 0 3 8"><path d="M0 1.500h1.300v4.500H0z" fill="#3a7a7a"/></svg>
<div style="left:0px;top:678px;width:502px;height:326px;background:#ffffff;"></div>
<div style="left:0px;top:678px;width:502px;height:24px;background:#f4f6fc;"></div>
<div style="left:0px;top:678px;width:86px;height:24.5px;background:linear-gradient(#d8e1ed,#eef2f8 50%,#ffffff 95%);border-radius:0 7px 0 0;"></div>
<span class="u" style="left:4px;top:682.93px;font-size:13.2px;line-height:17px;color:#1c1c1c;transform:scaleX(0.9610);">Dashboard</span>
<div style="left:0px;top:709.0px;width:171px;height:1.5px;background:linear-gradient(90deg,#ececec,#f4f4f4 70%,#ffffff);"></div>
<div style="left:0px;top:768.5px;width:84px;height:1.5px;background:linear-gradient(90deg,#ececec,#f4f4f4 70%,#ffffff);"></div>
<div style="left:0px;top:849.1px;width:110px;height:1.5px;background:linear-gradient(90deg,#ececec,#f4f4f4 70%,#ffffff);"></div>
<div style="left:0px;top:928.5px;width:110px;height:1.5px;background:linear-gradient(90deg,#ececec,#f4f4f4 70%,#ffffff);"></div>
<span class="u" style="left:7.3px;top:709.70px;font-size:13px;line-height:17px;color:#0f7fd6;font-weight:700;transform:scaleX(0.9669);">Project Creation</span>
<svg style="left:0px;top:716.2px;" width="4" height="5" viewBox="0 0 4 5"><path d="M-3 0.5H3L0 4Z" fill="#2a86d8"/></svg>
<span class="u" style="left:7.3px;top:771.30px;font-size:13px;line-height:17px;color:#0f7fd6;font-weight:700;transform:scaleX(0.9942);">Build/Debug</span>
<svg style="left:0px;top:777.8px;" width="4" height="5" viewBox="0 0 4 5"><path d="M-3 0.5H3L0 4Z" fill="#2a86d8"/></svg>
<span class="u" style="left:7.3px;top:850.40px;font-size:13px;line-height:17px;color:#0f7fd6;font-weight:700;transform:scaleX(0.9396);">Settings</span>
<svg style="left:0px;top:856.9px;" width="4" height="5" viewBox="0 0 4 5"><path d="M-3 0.5H3L0 4Z" fill="#2a86d8"/></svg>
<span class="u" style="left:7.3px;top:929.40px;font-size:13px;line-height:17px;color:#0f7fd6;font-weight:700;transform:scaleX(0.9496);">Miscellaneous</span>
<svg style="left:0px;top:935.9px;" width="4" height="5" viewBox="0 0 4 5"><path d="M-3 0.5H3L0 4Z" fill="#2a86d8"/></svg>
<span class="u" style="left:13.9px;top:730.70px;font-size:13px;line-height:17px;color:#2f86d6;transform:scaleX(1.0075);">S32DS Application Project</span>
<span class="u" style="left:13.9px;top:748.50px;font-size:13px;line-height:17px;color:#2f86d6;transform:scaleX(0.9773);">S32DS Library Project</span>
<span class="u" style="left:13.9px;top:792.00px;font-size:13px;line-height:17px;color:#2f86d6;transform:scaleX(1.0262);">Build  (All)</span>
<span class="u" style="left:13.9px;top:809.80px;font-size:13px;line-height:17px;color:#2f86d6;transform:scaleX(0.9456);">Clean  (All)</span>
<span class="u" style="left:13.9px;top:827.50px;font-size:13px;line-height:17px;color:#2f86d6;transform:scaleX(1.0206);">Debug</span>
<span class="u" style="left:13.9px;top:871.00px;font-size:13px;line-height:17px;color:#2f86d6;transform:scaleX(1.0250);">Project settings</span>
<span class="u" style="left:13.9px;top:888.80px;font-size:13px;line-height:17px;color:#2f86d6;transform:scaleX(1.0100);">Build settings</span>
<span class="u" style="left:13.9px;top:906.60px;font-size:13px;line-height:17px;color:#2f86d6;transform:scaleX(1.0227);">Debug settings</span>
<span class="u" style="left:13.9px;top:950.10px;font-size:13px;line-height:17px;color:#2f86d6;transform:scaleX(1.0303);">Getting Started</span>
<span class="u" style="left:13.9px;top:967.90px;font-size:13px;line-height:17px;color:#2f86d6;transform:scaleX(0.9507);">Quick access</span>
<div style="left:502px;top:674px;width:4.5px;height:330px;background:#e0e5f5;"></div>
<svg style="left:72.1px;top:686.8px;" width="9.4" height="8.8" viewBox="0 0 10 10"><path d="M.6 2.600L2.600 .6L5 3L7.400 .6L9.400 2.600L7 5L9.400 7.400L7.400 9.400L5 7L2.600 9.400L.6 7.400L3 5Z" fill="#ffffff" stroke="#858585" stroke-width=".95" stroke-linejoin="round"/></svg>
<svg style="left:422.5px;top:681.5px;" width="14.0" height="14.0" viewBox="0 0 16 16"><path d="M1 5.500h5l1 1.300h6.500l-1.200 7H1z" fill="#f6d88a" stroke="#5a7fc8" stroke-width="1"/><path d="M7 6l3-4.500l3 2" fill="none" stroke="#2fa84a" stroke-width="1.500"/><rect x="3" y="8.500" width="6" height="3.500" fill="#dfe8f8" stroke="#5a7fc8" stroke-width=".7"/></svg>
<svg style="left:448px;top:682.6px;" width="4" height="11.6" viewBox="0 0 4 11.600"><circle cx="2" cy="1.800" r="1.300" fill="#fff" stroke="#6e6e6e" stroke-width=".8"/><circle cx="2" cy="5.800" r="1.300" fill="#fff" stroke="#6e6e6e" stroke-width=".8"/><circle cx="2" cy="9.800" r="1.300" fill="#fff" stroke="#6e6e6e" stroke-width=".8"/></svg>
<svg style="left:464.5px;top:684.5px;" width="9" height="3.6" viewBox="0 0 9 3.600"><rect x=".5" y=".5" width="8" height="2.600" fill="#fdfdfd" stroke="#777" stroke-width=".9"/></svg>
<svg style="left:483px;top:684.5px;" width="9" height="8.3" viewBox="0 0 9 8.300"><rect x=".5" y=".5" width="8" height="7.300" fill="#fdfdfd" stroke="#7a7a7a" stroke-width=".9"/><rect x=".5" y=".5" width="8" height="1.600" fill="#8a8a8a"/></svg>
<svg style="left:-1px;top:685px;" width="4" height="9" viewBox="0 0 4 9"><rect x="0" y="1" width="2.500" height="7" fill="#8fa9d8"/></svg>
<svg style="left:-6px;top:733.4px;" width="14" height="14" viewBox="0 0 16 16"><path d="M6 9c0-4 5-5 8-2" fill="none" stroke="#d8922a" stroke-width="1.800"/><path d="M13 2l.8 1.800l2 .2l-1.500 1.300l.5 2L13 6.300" fill="#f5d25a" stroke="#c9a02a" stroke-width=".5"/></svg>
<svg style="left:-6px;top:751.2px;" width="14" height="14" viewBox="0 0 16 16"><rect x="6" y="4" width="9" height="2.500" fill="#d8922a"/><rect x="6" y="7.500" width="9" height="2.500" fill="#4f8fd8"/><rect x="6" y="11" width="9" height="2.500" fill="#3fa85a"/><path d="M14 1l.7 1.500l1.600 .2" stroke="#f5c23a" stroke-width="1.500" fill="none"/></svg>
<svg style="left:-6px;top:794.7px;" width="14" height="14" viewBox="0 0 16 16"><path d="M6 3l4 2l-1 2l5 6l-2 1.500l-5-6.500l-2 .5z" fill="#8a5a2a" stroke="#5a3a1a" stroke-width=".6"/></svg>
<svg style="left:-6px;top:812.5px;" width="14" height="14" viewBox="0 0 16 16"><path d="M8 13c1-4 3-7 6-10l1.500 1.500c-2 3-3 6-3.500 9z" fill="#c98a4a" stroke="#8a5a2a" stroke-width=".6"/></svg>
<svg style="left:-6px;top:830.2px;" width="14" height="14" viewBox="0 0 16 16"><ellipse cx="10" cy="9" rx="3" ry="4" fill="#6fb98a" stroke="#1f7a6a" stroke-width="1"/><path d="M6 5l2 2M14 5l-2 2M6 9h2M6 13l2-2M14 13l-2-2" stroke="#2a8a78" stroke-width="1"/></svg>
<svg style="left:-6px;top:873.7px;" width="14" height="14" viewBox="0 0 16 16"><path d="M6 4h6v2H6z" fill="#e8c86a"/><circle cx="10.500" cy="9.500" r="4" fill="#b9bcc2" stroke="#5a6068" stroke-width="1.300" stroke-dasharray="1.800 1"/><circle cx="10.500" cy="9.500" r="1.300" fill="#fff"/><path d="M6 7h3M6 13h4" stroke="#3a8a7a" stroke-width="1.200" stroke-dasharray="1.200 .8"/><path d="M12 12l3 2.500" stroke="#4a5058" stroke-width="1.500"/></svg>
<svg style="left:-6px;top:891.5px;" width="14" height="14" viewBox="0 0 16 16"><path d="M6 4h6v2H6z" fill="#e8c86a"/><circle cx="10.500" cy="9.500" r="4" fill="#b9bcc2" stroke="#5a6068" stroke-width="1.300" stroke-dasharray="1.800 1"/><circle cx="10.500" cy="9.500" r="1.300" fill="#fff"/><path d="M6 7h3M6 13h4" stroke="#3a8a7a" stroke-width="1.200" stroke-dasharray="1.200 .8"/><path d="M12 12l3 2.500" stroke="#4a5058" stroke-width="1.500"/></svg>
<svg style="left:-6px;top:909.3px;" width="14" height="14" viewBox="0 0 16 16"><path d="M6 4h6v2H6z" fill="#e8c86a"/><circle cx="10.500" cy="9.500" r="4" fill="#b9bcc2" stroke="#5a6068" stroke-width="1.300" stroke-dasharray="1.800 1"/><circle cx="10.500" cy="9.500" r="1.300" fill="#fff"/><path d="M6 7h3M6 13h4" stroke="#3a8a7a" stroke-width="1.200" stroke-dasharray="1.200 .8"/><path d="M12 12l3 2.500" stroke="#4a5058" stroke-width="1.500"/></svg>
<svg style="left:-6px;top:952.8px;" width="14" height="14" viewBox="0 0 16 16"><path d="M6 6.500l3.500-1.500l3 2v4l-3.500 1.500l-3-2z" fill="#7ab83a"/><path d="M10.500 6l3-1l2.500 2v3.500l-3 1l-2.500-2z" fill="#3aa8c8"/><path d="M5 9l2.500-.8l2 1.500v2.800l-2.500 .8l-2-1.500z" fill="#f0b83a"/></svg>
<svg style="left:-6px;top:970.6px;" width="14" height="14" viewBox="0 0 16 16"><circle cx="7.500" cy="9" r="2.800" fill="#f6d24a" stroke="#c9981c" stroke-width=".9"/><path d="M10 8.300h6v1.600h-1.300v1.300h-1.500v-1.300h-3.200z" fill="#f3c644" stroke="#c9981c" stroke-width=".6"/></svg>
<div style="left:506px;top:62.8px;width:1097px;height:705.2px;background:#ffffff;border-radius:6px;"></div>
<div style="left:506px;top:62.8px;width:1097px;height:23.7px;background:#f4f6fc;border-radius:6px 6px 0 0;"></div>
<span class="u" style="left:526px;top:66.93px;font-size:13.2px;line-height:17px;color:#a0a0a0;transform:scaleX(0.9715);">Rte_Application_Core0_QM.c</span>
<span class="u" style="left:735px;top:66.93px;font-size:13.2px;line-height:17px;color:#a0a0a0;transform:scaleX(0.9382);">S32K314_flash.ld</span>
<span class="u" style="left:872px;top:66.93px;font-size:13.2px;line-height:17px;color:#a0a0a0;transform:scaleX(0.9525);">main.c</span>
<span class="u" style="left:949px;top:66.93px;font-size:13.2px;line-height:17px;color:#a0a0a0;transform:scaleX(0.9463);">Os_Arch_Exception.c</span>
<span class="u" style="left:1185px;top:66.93px;font-size:13.2px;line-height:17px;color:#a0a0a0;transform:scaleX(0.9321);">DCDCManage.c</span>
<span class="u" style="left:1314.5px;top:66.93px;font-size:13.2px;line-height:17px;color:#a0a0a0;transform:scaleX(0.9919);">math.h</span>
<span class="u" style="left:1395px;top:66.93px;font-size:13.2px;line-height:17px;color:#a0a0a0;transform:scaleX(0.9299);">HVIL.h</span>
<div style="left:1090.3px;top:62.8px;width:76.7px;height:24.2px;background:linear-gradient(#d8e1ed,#eef2f8 50%,#ffffff 95%);border-radius:6px 6px 0 0;"></div>
<span class="u" style="left:1109px;top:66.93px;font-size:13.2px;line-height:17px;color:#2a2a2a;transform:scaleX(0.8970);">HVIL.c</span>
<div style="left:549px;top:328px;width:1025.6px;height:16px;background:#e8f2fe;"></div>
<div style="left:549.2px;top:328.1px;width:388.9px;height:15.6px;background:#dceacd;"></div>
<div style="left:642.7156px;top:280px;width:122.92px;height:16px;background:#f0d9a8;"></div>
<div style="left:721.9288px;top:344px;width:122.92px;height:16px;background:#d4d4d4;"></div>
<div style="left:508.4px;top:88px;width:9.6px;height:662.5px;background:#79b5e8;border-top:1px solid #3f8fe0;"></div>
<div style="left:1574.6px;top:88px;width:16.4px;height:662.5px;background:#f0f0f0;"></div>
<div style="left:1580px;top:168.5px;width:5.5px;height:80.5px;background:#8b8b8b;"></div>
<div style="left:1591px;top:88px;width:12px;height:662.5px;background:#f8f8f8;"></div>
<div style="left:506.5px;top:750.5px;width:1096.5px;height:16.5px;background:#f5f5f5;border-radius:0 0 6px 6px;"></div>
<div style="left:547.5px;top:750.5px;width:1027.1px;height:16.5px;background:#f0f0f0;"></div>
<span class="m" style="left:525.6px;top:89.80px;font-size:12px;line-height:16px;color:#787878;">34</span>
<span class="m" style="left:549.6px;top:89.80px;font-size:12px;line-height:16px;color:#000;"><b style="color:#7f0055">static</b> <b style="color:#7f0055">void</b> <b>HVIL_inner_default_WaterFlow</b>(<span style="color:#005032">float32</span> rtu_InputVolltage, <span style="color:#005032">float64</span></span>
<span class="m" style="left:525.6px;top:105.80px;font-size:12px;line-height:16px;color:#787878;">35</span>
<span class="m" style="left:549.6px;top:105.80px;font-size:12px;line-height:16px;color:#000;">  rtp_CheckTime, <span style="color:#005032">float64</span> rtp_OC14_HV, <span style="color:#005032">float64</span> rtp_OC14_LV, <span style="color:#005032">float64</span> rtp_OFF_HV,</span>
<span class="m" style="left:525.6px;top:121.80px;font-size:12px;line-height:16px;color:#787878;">36</span>
<span class="m" style="left:549.6px;top:121.80px;font-size:12px;line-height:16px;color:#000;">  <span style="color:#005032">float64</span> rtp_OFF_LV, <span style="color:#005032">float64</span> rtp_ON_HV, <span style="color:#005032">float64</span> rtp_ON_LV, <span style="color:#005032">float64</span> rtp_RSC_HV,</span>
<span class="m" style="left:525.6px;top:137.80px;font-size:12px;line-height:16px;color:#787878;">37</span>
<span class="m" style="left:549.6px;top:137.80px;font-size:12px;line-height:16px;color:#000;">  <span style="color:#005032">float64</span> rtp_RSC_LV, <span style="color:#005032">float64</span> rtp_SCN_HV, <span style="color:#005032">float64</span> rtp_SCN_LV, <span style="color:#005032">float64</span> rtp_SCP_HV,</span>
<span class="m" style="left:525.6px;top:153.80px;font-size:12px;line-height:16px;color:#787878;">38</span>
<span class="m" style="left:549.6px;top:153.80px;font-size:12px;line-height:16px;color:#000;">  <span style="color:#005032">float64</span> rtp_SCP_LV, <span style="color:#005032">DW_ACInterlockState_Judge_HVI_T</span> *localDW)</span>
<span class="m" style="left:525.6px;top:169.80px;font-size:12px;line-height:16px;color:#787878;">39</span>
<span class="m" style="left:549.6px;top:169.80px;font-size:12px;line-height:16px;color:#000;">{</span>
<span class="m" style="left:525.6px;top:185.80px;font-size:12px;line-height:16px;color:#787878;">40</span>
<span class="m" style="left:549.6px;top:185.80px;font-size:12px;line-height:16px;color:#000;">  <span style="color:#005032">sint64</span> tmp;</span>
<span class="m" style="left:525.6px;top:201.80px;font-size:12px;line-height:16px;color:#787878;">41</span>
<span class="m" style="left:525.6px;top:217.80px;font-size:12px;line-height:16px;color:#787878;">42</span>
<span class="m" style="left:549.6px;top:217.80px;font-size:12px;line-height:16px;color:#000;"><span style="color:#3f7f5f">  /* Chart: &#x27;&lt;S3&gt;/eCompInterlockState_Judge_Chart&#x27; */</span></span>
<span class="m" style="left:525.6px;top:233.80px;font-size:12px;line-height:16px;color:#787878;">43</span>
<span class="m" style="left:549.6px;top:233.80px;font-size:12px;line-height:16px;color:#000;"><span style="color:#3f7f5f">  /* Chart: &#x27;&lt;S3&gt;/eCompInterlockState_Judge_Chart&#x27; */</span></span>
<span class="m" style="left:525.6px;top:249.80px;font-size:12px;line-height:16px;color:#787878;">44</span>
<span class="m" style="left:549.6px;top:249.80px;font-size:12px;line-height:16px;color:#000;">  <b style="color:#7f0055">if</b> ((((<span style="color:#005032">float64</span>)rtu_InputVolltage) &lt; rtp_ON_LV) || (((<span style="color:#005032">float64</span>)rtu_InputVolltage)</span>
<span class="m" style="left:525.6px;top:265.80px;font-size:12px;line-height:16px;color:#787878;">45</span>
<span class="m" style="left:549.6px;top:265.80px;font-size:12px;line-height:16px;color:#000;">       &gt; rtp_ON_HV)) {</span>
<span class="m" style="left:525.6px;top:281.80px;font-size:12px;line-height:16px;color:#787878;">46</span>
<span class="m" style="left:549.6px;top:281.80px;font-size:12px;line-height:16px;color:#000;">    localDW-&gt;<span style="color:#0000c0">durationCounter_1</span> = 0;</span>
<span class="m" style="left:525.6px;top:297.80px;font-size:12px;line-height:16px;color:#787878;">47</span>
<span class="m" style="left:549.6px;top:297.80px;font-size:12px;line-height:16px;color:#000;">  }</span>
<span class="m" style="left:525.6px;top:313.80px;font-size:12px;line-height:16px;color:#787878;">48</span>
<span class="m" style="left:525.6px;top:329.80px;font-size:12px;line-height:16px;color:#787878;">49</span>
<span class="m" style="left:549.6px;top:329.80px;font-size:12px;line-height:16px;color:#000;">  tmp = (<span style="color:#005032">sint64</span>)((<span style="color:#005032">uint32</span>)<b style="color:#642880">ceil</b>(rtp_CheckTime * 100.0));</span>
<span class="m" style="left:525.6px;top:345.80px;font-size:12px;line-height:16px;color:#787878;">50</span>
<span class="m" style="left:549.6px;top:345.80px;font-size:12px;line-height:16px;color:#000;">  <b style="color:#7f0055">if</b> (((<span style="color:#005032">sint64</span>)localDW-&gt;<span style="color:#0000c0">durationCounter_1</span>) &gt; tmp) {</span>
<span class="m" style="left:525.6px;top:361.80px;font-size:12px;line-height:16px;color:#787878;">51</span>
<span class="m" style="left:549.6px;top:361.80px;font-size:12px;line-height:16px;color:#000;">    localDW-&gt;<span style="color:#0000c0">state</span> = 1.0;</span>
<span class="m" style="left:525.6px;top:377.80px;font-size:12px;line-height:16px;color:#787878;">52</span>
<span class="m" style="left:549.6px;top:377.80px;font-size:12px;line-height:16px;color:#000;">  } <b style="color:#7f0055">else</b> {</span>
<span class="m" style="left:525.6px;top:393.80px;font-size:12px;line-height:16px;color:#787878;">53</span>
<span class="m" style="left:549.6px;top:393.80px;font-size:12px;line-height:16px;color:#000;">    <b style="color:#7f0055">if</b> ((((<span style="color:#005032">float64</span>)rtu_InputVolltage) &lt; rtp_OFF_LV) || (((<span style="color:#005032">float64</span>)</span>
<span class="m" style="left:525.6px;top:409.80px;font-size:12px;line-height:16px;color:#787878;">54</span>
<span class="m" style="left:549.6px;top:409.80px;font-size:12px;line-height:16px;color:#000;">          rtu_InputVolltage) &gt; rtp_OFF_HV)) {</span>
<span class="m" style="left:525.6px;top:425.80px;font-size:12px;line-height:16px;color:#787878;">55</span>
<span class="m" style="left:549.6px;top:425.80px;font-size:12px;line-height:16px;color:#000;">      localDW-&gt;<span style="color:#0000c0">durationCounter_2</span> = 0;</span>
<span class="m" style="left:525.6px;top:441.80px;font-size:12px;line-height:16px;color:#787878;">56</span>
<span class="m" style="left:549.6px;top:441.80px;font-size:12px;line-height:16px;color:#000;">    }</span>
<span class="m" style="left:525.6px;top:457.80px;font-size:12px;line-height:16px;color:#787878;">57</span>
<span class="m" style="left:525.6px;top:473.80px;font-size:12px;line-height:16px;color:#787878;">58</span>
<span class="m" style="left:549.6px;top:473.80px;font-size:12px;line-height:16px;color:#000;">    <b style="color:#7f0055">if</b> (((<span style="color:#005032">sint64</span>)localDW-&gt;<span style="color:#0000c0">durationCounter_2</span>) &gt; tmp) {</span>
<span class="m" style="left:525.6px;top:489.80px;font-size:12px;line-height:16px;color:#787878;">59</span>
<span class="m" style="left:549.6px;top:489.80px;font-size:12px;line-height:16px;color:#000;">      localDW-&gt;<span style="color:#0000c0">state</span> = 2.0;</span>
<span class="m" style="left:525.6px;top:505.80px;font-size:12px;line-height:16px;color:#787878;">60</span>
<span class="m" style="left:549.6px;top:505.80px;font-size:12px;line-height:16px;color:#000;">    } <b style="color:#7f0055">else</b> {</span>
<span class="m" style="left:525.6px;top:521.80px;font-size:12px;line-height:16px;color:#787878;">61</span>
<span class="m" style="left:549.6px;top:521.80px;font-size:12px;line-height:16px;color:#000;">      <b style="color:#7f0055">if</b> ((((<span style="color:#005032">float64</span>)rtu_InputVolltage) &lt; rtp_SCP_LV) || (((<span style="color:#005032">float64</span>)</span>
<span class="m" style="left:525.6px;top:537.80px;font-size:12px;line-height:16px;color:#787878;">62</span>
<span class="m" style="left:549.6px;top:537.80px;font-size:12px;line-height:16px;color:#000;">            rtu_InputVolltage) &gt; rtp_SCP_HV)) {</span>
<span class="m" style="left:525.6px;top:553.80px;font-size:12px;line-height:16px;color:#787878;">63</span>
<span class="m" style="left:549.6px;top:553.80px;font-size:12px;line-height:16px;color:#000;">        localDW-&gt;<span style="color:#0000c0">durationCounter_3</span> = 0;</span>
<span class="m" style="left:525.6px;top:569.80px;font-size:12px;line-height:16px;color:#787878;">64</span>
<span class="m" style="left:549.6px;top:569.80px;font-size:12px;line-height:16px;color:#000;">      }</span>
<span class="m" style="left:525.6px;top:585.80px;font-size:12px;line-height:16px;color:#787878;">65</span>
<span class="m" style="left:525.6px;top:601.80px;font-size:12px;line-height:16px;color:#787878;">66</span>
<span class="m" style="left:549.6px;top:601.80px;font-size:12px;line-height:16px;color:#000;">      <b style="color:#7f0055">if</b> (((<span style="color:#005032">sint64</span>)localDW-&gt;<span style="color:#0000c0">durationCounter_3</span>) &gt; tmp) {</span>
<span class="m" style="left:525.6px;top:617.80px;font-size:12px;line-height:16px;color:#787878;">67</span>
<span class="m" style="left:549.6px;top:617.80px;font-size:12px;line-height:16px;color:#000;">        localDW-&gt;<span style="color:#0000c0">state</span> = 3.0;</span>
<span class="m" style="left:525.6px;top:633.80px;font-size:12px;line-height:16px;color:#787878;">68</span>
<span class="m" style="left:549.6px;top:633.80px;font-size:12px;line-height:16px;color:#000;">      } <b style="color:#7f0055">else</b> {</span>
<span class="m" style="left:525.6px;top:649.80px;font-size:12px;line-height:16px;color:#787878;">69</span>
<span class="m" style="left:549.6px;top:649.80px;font-size:12px;line-height:16px;color:#000;">        <b style="color:#7f0055">if</b> ((((<span style="color:#005032">float64</span>)rtu_InputVolltage) &lt; rtp_SCN_LV) || (((<span style="color:#005032">float64</span>)</span>
<span class="m" style="left:525.6px;top:665.80px;font-size:12px;line-height:16px;color:#787878;">70</span>
<span class="m" style="left:549.6px;top:665.80px;font-size:12px;line-height:16px;color:#000;">              rtu_InputVolltage) &gt; rtp_SCN_HV)) {</span>
<span class="m" style="left:525.6px;top:681.80px;font-size:12px;line-height:16px;color:#787878;">71</span>
<span class="m" style="left:549.6px;top:681.80px;font-size:12px;line-height:16px;color:#000;">          localDW-&gt;<span style="color:#0000c0">durationCounter_4</span> = 0;</span>
<span class="m" style="left:525.6px;top:697.80px;font-size:12px;line-height:16px;color:#787878;">72</span>
<span class="m" style="left:549.6px;top:697.80px;font-size:12px;line-height:16px;color:#000;">        }</span>
<span class="m" style="left:525.6px;top:713.80px;font-size:12px;line-height:16px;color:#787878;">73</span>
<span class="m" style="left:525.6px;top:729.80px;font-size:12px;line-height:16px;color:#787878;">74</span>
<span class="m" style="left:549.6px;top:729.80px;font-size:12px;line-height:16px;color:#000;">        <b style="color:#7f0055">if</b> (((<span style="color:#005032">sint64</span>)localDW-&gt;<span style="color:#0000c0">durationCounter_4</span>) &gt; tmp) {</span>
<span class="m" style="left:525.6px;top:745.80px;font-size:12px;line-height:16px;color:#787878;">75</span>
<span class="m" style="left:549.6px;top:745.80px;font-size:12px;line-height:16px;color:#000;">          localDW-&gt;<span style="color:#0000c0">state</span> = 4.0;</span>
<div style="left:506px;top:750.5px;width:1097px;height:22.0px;background:#e0e5f5;"></div>
<div style="left:506px;top:750.5px;width:1097px;height:17.3px;background:#f8f8f8;border-radius:0 0 6px 6px;"></div>
<div style="left:506px;top:750.5px;width:41.5px;height:17.3px;background:#f5f5f5;border-radius:0 0 0 6px;"></div>
<div style="left:547.5px;top:750.5px;width:1043.5px;height:16.3px;background:#f0f0f0;"></div>
<svg style="left:510px;top:68px;" width="14.0" height="14.0" viewBox="0 0 16 16"><path d="M2.500 1.500h7l3 3v10h-10z" fill="#fbfaf6" stroke="#d9cfb6" stroke-width=".9"/><path d="M9.500 1.500v3h3" fill="none" stroke="#d9cfb6" stroke-width=".8"/><text x="5" y="12.300" font-size="8.500" font-family="Liberation Sans,sans-serif" font-weight="700" fill="#9fb0d6">c</text><rect x="3.300" y="10.800" width="1.300" height="1.300" fill="#9fb0d6"/></svg>
<svg style="left:719px;top:68px;" width="14.0" height="14.0" viewBox="0 0 16 16"><rect x="1" y="1" width="14" height="14" rx="1" fill="#7d8bd0" stroke="#6471b8" stroke-width=".8"/><text x="2.200" y="7.600" font-size="6.500" font-family="Liberation Sans,sans-serif" font-weight="700" fill="#fff">32</text><text x="2.200" y="13.800" font-size="6.500" font-family="Liberation Sans,sans-serif" font-weight="700" fill="#fff">DS</text></svg>
<svg style="left:855px;top:68px;" width="14.0" height="14.0" viewBox="0 0 16 16"><path d="M2.500 1.500h7l3 3v10h-10z" fill="#fbfaf6" stroke="#d9cfb6" stroke-width=".9"/><path d="M9.500 1.500v3h3" fill="none" stroke="#d9cfb6" stroke-width=".8"/><text x="5" y="12.300" font-size="8.500" font-family="Liberation Sans,sans-serif" font-weight="700" fill="#9fb0d6">c</text><rect x="3.300" y="10.800" width="1.300" height="1.300" fill="#9fb0d6"/></svg>
<svg style="left:932.5px;top:68px;" width="14.0" height="14.0" viewBox="0 0 16 16"><path d="M2.500 1.500h7l3 3v10h-10z" fill="#fbfaf6" stroke="#d9cfb6" stroke-width=".9"/><path d="M9.500 1.500v3h3" fill="none" stroke="#d9cfb6" stroke-width=".8"/><text x="5" y="12.300" font-size="8.500" font-family="Liberation Sans,sans-serif" font-weight="700" fill="#9fb0d6">c</text><rect x="3.300" y="10.800" width="1.300" height="1.300" fill="#9fb0d6"/></svg>
<svg style="left:1093.5px;top:68px;" width="14.0" height="14.0" viewBox="0 0 16 16"><path d="M2.500 1.500h7l3 3v10h-10z" fill="#fdfdfb" stroke="#a59a7a" stroke-width=".9"/><path d="M9.500 1.500v3h3" fill="#f6ebc4" stroke="#b5a060" stroke-width=".8"/><text x="5" y="12.300" font-size="8.500" font-family="Liberation Sans,sans-serif" font-weight="700" fill="#3a5fa8">c</text><rect x="3.300" y="10.800" width="1.300" height="1.300" fill="#3a5fa8"/></svg>
<svg style="left:1168.7px;top:68px;" width="14.0" height="14.0" viewBox="0 0 16 16"><path d="M2.500 1.500h7l3 3v10h-10z" fill="#fbfaf6" stroke="#d9cfb6" stroke-width=".9"/><path d="M9.500 1.500v3h3" fill="none" stroke="#d9cfb6" stroke-width=".8"/><text x="5" y="12.300" font-size="8.500" font-family="Liberation Sans,sans-serif" font-weight="700" fill="#9fb0d6">c</text><rect x="3.300" y="10.800" width="1.300" height="1.300" fill="#9fb0d6"/></svg>
<svg style="left:1297.5px;top:68px;" width="14.0" height="14.0" viewBox="0 0 16 16"><path d="M1.500 1h7l2 2" fill="none" stroke="#d9c48a" stroke-width=".9"/><path d="M3 2.500h7l3 3v9h-10z" fill="#fbf3da" stroke="#cdb26a" stroke-width=".9"/><path d="M1.500 1v9" stroke="#d9c48a" stroke-width=".9"/><text x="5.300" y="12.800" font-size="8.500" font-family="Liberation Sans,sans-serif" font-weight="700" fill="#8a9cc8">h</text><rect x="3.800" y="11.300" width="1.300" height="1.300" fill="#8a9cc8"/></svg>
<svg style="left:1378.3px;top:68px;" width="14.0" height="14.0" viewBox="0 0 16 16"><path d="M2.500 1.500h7l3 3v10h-10z" fill="#fbf6e6" stroke="#d6c492" stroke-width=".9"/><path d="M9.500 1.500v3h3" fill="none" stroke="#d6c492" stroke-width=".8"/><text x="5" y="12.300" font-size="8.500" font-family="Liberation Sans,sans-serif" font-weight="700" fill="#8fa0cc">h</text><rect x="3.300" y="10.800" width="1.300" height="1.300" fill="#8fa0cc"/></svg>
<svg style="left:1150.8px;top:70.8px;" width="9.4" height="8.8" viewBox="0 0 10 10"><path d="M.6 2.600L2.600 .6L5 3L7.400 .6L9.400 2.600L7 5L9.400 7.400L7.400 9.400L5 7L2.600 9.400L.6 7.400L3 5Z" fill="#ffffff" stroke="#858585" stroke-width=".95" stroke-linejoin="round"/></svg>
<svg style="left:1564.6px;top:69px;" width="9" height="3.6" viewBox="0 0 9 3.600"><rect x=".5" y=".5" width="8" height="2.600" fill="#fdfdfd" stroke="#777" stroke-width=".9"/></svg>
<svg style="left:1583.6px;top:69px;" width="9" height="8.3" viewBox="0 0 9 8.300"><rect x=".5" y=".5" width="8" height="7.300" fill="#fdfdfd" stroke="#7a7a7a" stroke-width=".9"/><rect x=".5" y=".5" width="8" height="1.600" fill="#8a8a8a"/></svg>
<svg style="left:540.1px;top:92.1px;" width="6.8" height="6.8" viewBox="0 0 7 7"><circle cx="3.500" cy="3.500" r="3.100" fill="#e2eaf3" stroke="#b9c6d6" stroke-width=".7"/><path d="M1.700 3.500h3.600" stroke="#3f4f66" stroke-width=".9"/></svg>
<div style="left:547px;top:88px;width:1px;height:662.5px;background:#f3f3f3;"></div>
<svg style="left:509.3px;top:331.7px;" width="8" height="8.5" viewBox="0 0 8.500 9"><path d="M.8 3h3.400V.9L7.800 4.500L4.200 8.100V6H.8z" fill="#4a86d0" stroke="#eaf3fc" stroke-width="1.100" stroke-linejoin="round"/></svg>
<svg style="left:552px;top:753.5px;" width="8" height="10" viewBox="0 0 8 10"><path d="M6.500 1L1.500 5L6.500 9Z" fill="#a3a3a3"/></svg>
<svg style="left:1561.5px;top:753.5px;" width="8" height="10" viewBox="0 0 8 10"><path d="M1.500 1L6.500 5L1.500 9Z" fill="#a3a3a3"/></svg>
<div style="left:1593px;top:192.5px;width:7px;height:4.5px;background:#fdf6ea;border:1px solid #f1c48a;"></div>
<div style="left:1593px;top:344.5px;width:7px;height:4.5px;background:#fdf6ea;border:1px solid #f1c48a;"></div>
<div style="left:1593px;top:366px;width:7px;height:4.5px;background:#fdf6ea;border:1px solid #f1c48a;"></div>
<div style="left:1593px;top:370.5px;width:7px;height:4.5px;background:#fdf6ea;border:1px solid #f1c48a;"></div>
<div style="left:1593px;top:197.5px;width:7px;height:6.5px;background:#f3f8ee;border:1px solid #cfe0c0;"></div>
<svg style="left:530px;top:305px;" width="490" height="82" viewBox="0 0 490 82"><rect x="8.450" y="8.650" width="469.700" height="64.500" fill="none" stroke="#ff0505" stroke-width="2.500"/></svg>
<div style="left:1607px;top:63px;width:282px;height:419px;background:#ffffff;border-radius:6px 0 0 0;"></div>
<div style="left:1607px;top:63px;width:282px;height:23.5px;background:#f4f6fc;border-radius:6px 0 0 0;"></div>
<div style="left:1607px;top:63px;width:48.5px;height:24px;background:linear-gradient(#d8e1ed,#eef2f8 50%,#ffffff 95%);border-radius:6px 7px 0 0;"></div>
<span class="u" style="left:1626.8px;top:66.53px;font-size:13.2px;line-height:17px;color:#1c1c1c;transform:scaleX(0.9500);">V</span>
<span class="u" style="left:1674.6px;top:66.53px;font-size:13.2px;line-height:17px;color:#a0a0a0;transform:scaleX(0.9300);">B</span>
<span class="u" style="left:1705.6px;top:66.53px;font-size:13.2px;line-height:17px;color:#a0a0a0;transform:scaleX(0.9300);">E</span>
<span class="u" style="left:1736.6px;top:66.53px;font-size:13.2px;line-height:17px;color:#a0a0a0;transform:scaleX(0.9300);">P</span>
<span class="u" style="left:1767.1px;top:66.53px;font-size:13.2px;line-height:17px;color:#a0a0a0;transform:scaleX(0.9300);">A</span>
<span class="u" style="left:1799.6px;top:66.53px;font-size:13.2px;line-height:17px;color:#a0a0a0;transform:scaleX(0.9300);">E</span>
<div style="left:1607px;top:86.4px;width:282px;height:1.7px;background:#ffffff;"></div>
<div style="left:1776.7px;top:88.1px;width:112.3px;height:17.8px;background:#f4f6fc;"></div>
<span class="u" style="left:1614.7px;top:107.53px;font-size:13.2px;line-height:17px;color:#1c1c1c;transform:scaleX(0.9577);">Name</span>
<span class="u" style="left:1780.3px;top:107.53px;font-size:13.2px;line-height:17px;color:#1c1c1c;transform:scaleX(0.9792);">Type</span>
<div style="left:1774px;top:105.5px;width:1px;height:239.5px;background:#e6e6e6;"></div>
<div style="left:1884px;top:105.5px;width:5px;height:376.5px;background:#f0f0f0;"></div>
<div style="left:1609.5px;top:144.29999999999998px;width:274.5px;height:1.0px;background:#ececec;"></div>
<span class="u" style="left:1644.8px;top:127.03px;font-size:13.2px;line-height:17px;color:#1c1c1c;transform:scaleX(1.0224);">rtu_InputVolltage</span>
<span class="u" style="left:1779.2px;top:127.03px;font-size:13.2px;line-height:17px;color:#1c1c1c;transform:scaleX(1.0200);">float32</span>
<div style="left:1609.5px;top:162.67px;width:274.5px;height:1.0px;background:#ececec;"></div>
<span class="u" style="left:1644.8px;top:145.40px;font-size:13.2px;line-height:17px;color:#1c1c1c;transform:scaleX(0.9750);">rtp_CheckTime</span>
<span class="u" style="left:1779.2px;top:145.40px;font-size:13.2px;line-height:17px;color:#1c1c1c;transform:scaleX(1.0200);">float64</span>
<div style="left:1609.5px;top:181.04px;width:274.5px;height:1.0px;background:#ececec;"></div>
<span class="u" style="left:1644.8px;top:163.77px;font-size:13.2px;line-height:17px;color:#1c1c1c;transform:scaleX(0.9441);">rtp_OC14_HV</span>
<span class="u" style="left:1779.2px;top:163.77px;font-size:13.2px;line-height:17px;color:#1c1c1c;transform:scaleX(1.0200);">float64</span>
<div style="left:1609.5px;top:199.40999999999997px;width:274.5px;height:1.0px;background:#ececec;"></div>
<span class="u" style="left:1644.8px;top:182.14px;font-size:13.2px;line-height:17px;color:#1c1c1c;transform:scaleX(0.9376);">rtp_OC14_LV</span>
<span class="u" style="left:1779.2px;top:182.14px;font-size:13.2px;line-height:17px;color:#1c1c1c;transform:scaleX(1.0200);">float64</span>
<div style="left:1609.5px;top:217.77999999999997px;width:274.5px;height:1.0px;background:#ececec;"></div>
<span class="u" style="left:1644.8px;top:200.51px;font-size:13.2px;line-height:17px;color:#1c1c1c;transform:scaleX(0.9124);">rtp_OFF_HV</span>
<span class="u" style="left:1779.2px;top:200.51px;font-size:13.2px;line-height:17px;color:#1c1c1c;transform:scaleX(1.0200);">float64</span>
<div style="left:1609.5px;top:236.14999999999998px;width:274.5px;height:1.0px;background:#ececec;"></div>
<span class="u" style="left:1644.8px;top:218.88px;font-size:13.2px;line-height:17px;color:#1c1c1c;transform:scaleX(0.9067);">rtp_OFF_LV</span>
<span class="u" style="left:1779.2px;top:218.88px;font-size:13.2px;line-height:17px;color:#1c1c1c;transform:scaleX(1.0200);">float64</span>
<div style="left:1609.5px;top:254.51999999999998px;width:274.5px;height:1.0px;background:#ececec;"></div>
<span class="u" style="left:1644.8px;top:237.25px;font-size:13.2px;line-height:17px;color:#1c1c1c;transform:scaleX(0.9549);">rtp_ON_HV</span>
<span class="u" style="left:1779.2px;top:237.25px;font-size:13.2px;line-height:17px;color:#1c1c1c;transform:scaleX(1.0200);">float64</span>
<div style="left:1609.5px;top:272.89px;width:274.5px;height:1.0px;background:#ececec;"></div>
<span class="u" style="left:1644.8px;top:255.62px;font-size:13.2px;line-height:17px;color:#1c1c1c;transform:scaleX(0.9508);">rtp_ON_LV</span>
<span class="u" style="left:1779.2px;top:255.62px;font-size:13.2px;line-height:17px;color:#1c1c1c;transform:scaleX(1.0200);">float64</span>
<div style="left:1609.5px;top:291.26px;width:274.5px;height:1.0px;background:#ececec;"></div>
<span class="u" style="left:1644.8px;top:273.99px;font-size:13.2px;line-height:17px;color:#1c1c1c;transform:scaleX(0.9077);">rtp_RSC_HV</span>
<span class="u" style="left:1779.2px;top:273.99px;font-size:13.2px;line-height:17px;color:#1c1c1c;transform:scaleX(1.0200);">float64</span>
<div style="left:1609.5px;top:309.63px;width:274.5px;height:1.0px;background:#ececec;"></div>
<span class="u" style="left:1644.8px;top:292.36px;font-size:13.2px;line-height:17px;color:#1c1c1c;transform:scaleX(0.8992);">rtp_RSC_LV</span>
<span class="u" style="left:1779.2px;top:292.36px;font-size:13.2px;line-height:17px;color:#1c1c1c;transform:scaleX(1.0200);">float64</span>
<div style="left:1609.5px;top:328.0px;width:274.5px;height:1.0px;background:#ececec;"></div>
<span class="u" style="left:1644.8px;top:310.73px;font-size:13.2px;line-height:17px;color:#1c1c1c;transform:scaleX(0.9313);">rtp_SCN_HV</span>
<span class="u" style="left:1779.2px;top:310.73px;font-size:13.2px;line-height:17px;color:#1c1c1c;transform:scaleX(1.0200);">float64</span>
<span class="u" style="left:1644.8px;top:329.10px;font-size:13.2px;line-height:17px;color:#1c1c1c;transform:scaleX(0.9266);">rtp_SCN_LV</span>
<span class="u" style="left:1779.2px;top:329.10px;font-size:13.2px;line-height:17px;color:#1c1c1c;transform:scaleX(1.0200);">float64</span>
<div style="left:1607px;top:344.4px;width:277px;height:21.0px;background:#ffffff;"></div>
<div style="left:1609.5px;top:345.2px;width:279.5px;height:20.2px;background:#f0f0f0;"></div>
<div style="left:1626px;top:351px;width:132px;height:4.8px;background:#8b8b8b;"></div>
<div style="left:1609.5px;top:466.3px;width:279.5px;height:15.9px;background:#f0f0f0;border-radius:0 0 0 4px;"></div>
<svg style="left:1613px;top:468.5px;" width="10" height="10" viewBox="0 0 10 10"><path d="M7 1L2 5L7 9Z" fill="#a6a6a6"/></svg>
<svg style="left:1869.5px;top:468.5px;" width="10" height="10" viewBox="0 0 10 10"><path d="M3 1L8 5L3 9Z" fill="#a6a6a6"/></svg>
<svg style="left:1886.5px;top:372.5px;" width="3" height="5" viewBox="0 0 3 5"><path d="M3 0L.5 2.500L3 5Z" fill="#a6a6a6"/></svg>
<svg style="left:1886.5px;top:453px;" width="3" height="5" viewBox="0 0 3 5"><path d="M3 0L.5 2.500L3 5Z" fill="#a6a6a6"/></svg>
<div style="left:1607px;top:488px;width:282px;height:279.8px;background:#ffffff;border-radius:6px 0 0 6px;"></div>
<div style="left:1607px;top:488px;width:282px;height:23.5px;background:#f4f6fc;border-radius:6px 0 0 0;"></div>
<div style="left:1607px;top:488px;width:81.5px;height:24px;background:linear-gradient(#d8e1ed,#eef2f8 50%,#ffffff 95%);border-radius:6px 7px 0 0;"></div>
<span class="u" style="left:1627px;top:492.33px;font-size:13.2px;line-height:17px;color:#1c1c1c;transform:scaleX(0.9761);">Outline</span>
<span class="u" style="left:1708.6px;top:492.33px;font-size:13.2px;line-height:17px;color:#a0a0a0;transform:scaleX(0.9418);">Disassembly</span>
<div style="left:1764px;top:514px;width:125px;height:17px;background:#f4f6fc;"></div>
<div style="left:1628px;top:605px;width:261px;height:17.7px;background:#d9d9d9;"></div>
<span class="u" style="left:1651.4px;top:569.45px;font-size:12.6px;line-height:16px;color:#1c1c1c;transform:scaleX(1.0128);">HVIL_ACInterlockState_Judge(float32, float64, float64) : void</span>
<span class="u" style="left:1651.4px;top:532.73px;font-size:12.6px;line-height:16px;color:#1c1c1c;transform:scaleX(1.0128);">HVIL.h</span>
<span class="u" style="left:1651.4px;top:551.09px;font-size:12.6px;line-height:16px;color:#1c1c1c;transform:scaleX(0.9395);">HVIL_DW</span>
<span class="u" style="left:1708px;top:551.09px;font-size:12.6px;line-height:16px;color:#a38f5e;transform:scaleX(0.9307);">: DW_HVIL_T</span>
<span class="u" style="left:1651.4px;top:587.81px;font-size:12.6px;line-height:16px;color:#1c1c1c;transform:scaleX(1.0252);">HVIL_inner_default_WaterFlow(float32, float64, float64) : void</span>
<span class="u" style="left:1651.4px;top:606.17px;font-size:12.6px;line-height:16px;color:#1c1c1c;transform:scaleX(1.0252);">HVIL_inner_default_WaterFlow(float32, float64, float64) : void</span>
<span class="u" style="left:1651.4px;top:624.53px;font-size:12.6px;line-height:16px;color:#1c1c1c;transform:scaleX(1.0128);">HVIL_ACInterlockState_Judge(float32, float64, float64) : void</span>
<span class="u" style="left:1651.4px;top:642.89px;font-size:12.6px;line-height:16px;color:#1c1c1c;transform:scaleX(0.9999);">HVIL_Step(void)</span>
<span class="u" style="left:1748.4px;top:642.89px;font-size:12.6px;line-height:16px;color:#a38f5e;transform:scaleX(1.0163);">: void</span>
<span class="u" style="left:1651.4px;top:661.25px;font-size:12.6px;line-height:16px;color:#1c1c1c;transform:scaleX(1.0096);">HVIL_Init(void)</span>
<span class="u" style="left:1739.6px;top:661.25px;font-size:12.6px;line-height:16px;color:#a38f5e;transform:scaleX(1.0097);">: void</span>
<div style="left:1609.3px;top:751px;width:279.7px;height:16px;background:#f0f0f0;border-radius:0 0 0 4px;"></div>
<div style="left:1626px;top:757px;width:66px;height:4.6px;background:#8b8b8b;"></div>
<svg style="left:1610.6px;top:71.3px;" width="13" height="8" viewBox="0 0 16 10"><text x="0" y="8.300" font-size="9" font-family="Liberation Sans,sans-serif" font-weight="700" fill="#5a6c8c" letter-spacing="-.2">(x)</text><path d="M11.300 4.200h4M11.300 6.400h4" stroke="#6a7c9c" stroke-width="1.100"/></svg>
<svg style="left:1640.8px;top:70.8px;" width="9.4" height="8.8" viewBox="0 0 10 10"><path d="M.6 2.600L2.600 .6L5 3L7.400 .6L9.400 2.600L7 5L9.400 7.400L7.400 9.400L5 7L2.600 9.400L.6 7.400L3 5Z" fill="#ffffff" stroke="#858585" stroke-width=".95" stroke-linejoin="round"/></svg>
<svg style="left:1660px;top:69.5px;" width="11" height="11" viewBox="0 0 12.500 12"><circle cx="3.500" cy="4" r="3" fill="#9fc3e6" stroke="#7fa9d6" stroke-width=".7"/><circle cx="9" cy="8.500" r="3" fill="#9fc3e6" stroke="#7fa9d6" stroke-width=".7"/></svg>
<svg style="left:1690px;top:69.5px;" width="12" height="11.5" viewBox="0 0 13 13"><circle cx="3.300" cy="5" r="2.600" fill="none" stroke="#8fbcc8" stroke-width="1"/><circle cx="8.700" cy="5" r="2.600" fill="none" stroke="#8fbcc8" stroke-width="1"/><path d="M8.700 2.400L12.500 .8" stroke="#8fbcc8" stroke-width="1"/><path d="M4.500 10.500h4M6.500 8.500v4" stroke="#9fc0e0" stroke-width="1"/></svg>
<svg style="left:1721.5px;top:70px;" width="12" height="10" viewBox="0 0 13 11"><path d="M1.500 .5v4M4.800 .5v4M8.100 .5v4M11.400 .5v4M1.500 6.500v4M4.800 6.500v4M8.100 6.500v4M11.400 6.500v4" stroke="#a9bfdc" stroke-width="1.500" stroke-dasharray="2.300 .8"/></svg>
<svg style="left:1752.4px;top:70px;" width="12" height="10" viewBox="0 0 13 11"><path d="M1.500 .5v4M4.800 .5v4M8.100 .5v4M11.400 .5v4M1.500 6.500v4M4.800 6.500v4M8.100 6.500v4M11.400 6.500v4" stroke="#a9bfdc" stroke-width="1.500" stroke-dasharray="2.300 .8"/></svg>
<svg style="left:1784.6px;top:70px;" width="12" height="10" viewBox="0 0 13 11"><path d="M1.500 .5v4M4.800 .5v4M8.100 .5v4M11.400 .5v4M1.500 6.500v4M4.800 6.500v4M8.100 6.500v4M11.400 6.500v4" stroke="#d9dfe9" stroke-width="1.500" stroke-dasharray="2.300 .8"/></svg>
<svg style="left:1817.3px;top:68px;" width="11" height="11" viewBox="0 0 12 12"><path d="M.8 1l2.500 2.500L.8 6M4.500 1L7 3.500L4.500 6" fill="none" stroke="#222" stroke-width="1.300"/><text x="7.500" y="11.500" font-size="7.500" font-family="Liberation Sans,sans-serif" fill="#222">2</text></svg>
<svg style="left:1863.6px;top:69px;" width="9" height="3.6" viewBox="0 0 9 3.600"><rect x=".5" y=".5" width="8" height="2.600" fill="#fdfdfd" stroke="#777" stroke-width=".9"/></svg>
<svg style="left:1881.8px;top:69px;" width="9" height="8.3" viewBox="0 0 9 8.300"><rect x=".5" y=".5" width="8" height="7.300" fill="#fdfdfd" stroke="#7a7a7a" stroke-width=".9"/><rect x=".5" y=".5" width="8" height="1.600" fill="#8a8a8a"/></svg>
<div style="left:1795.4px;top:88.3px;width:18.0px;height:16.6px;background:#cde6fb;border:1px solid #7cbcf0;border-radius:2.5px;"></div>
<svg style="left:1778.6px;top:89.6px;" width="14.0" height="14.0" viewBox="0 0 16 16"><rect x="3" y="6.500" width="11.500" height="6" rx="1" fill="#ececec" stroke="#d6d6d6" stroke-width=".7"/><text x="1" y="10" font-size="12" font-style="italic" font-family="Liberation Serif,serif" fill="#a3a3a3">x</text><path d="M3 14.500h8.500" stroke="#b9b9b9" stroke-width="1.200" stroke-dasharray="1.800 1"/></svg>
<svg style="left:1797.4px;top:89.6px;" width="14.0" height="14.0" viewBox="0 0 16 16"><path d="M1 6.500h5V4.300L9.500 7.500L6 10.700V8.500H1z" fill="#f3c644" stroke="#b98a1c" stroke-width=".6"/><path d="M10.500 2v11.500M10.500 5h3M10.500 9h3M10.500 13h3" stroke="#2f5fb0" stroke-width="1.300"/><rect x="12.500" y="7.800" width="2.500" height="2.500" fill="#e0343f"/><rect x="12.500" y="11.800" width="2.500" height="2.500" fill="#e0343f"/></svg>
<svg style="left:1815.5px;top:89.6px;" width="14.0" height="14.0" viewBox="0 0 16 16"><rect x="2" y="2.500" width="10" height="9" rx="1" fill="#dfe9f7" stroke="#8ea4c8" stroke-width="1"/><rect x="4" y="4.500" width="10" height="9" rx="1" fill="#f4f8fd" stroke="#6f8fc0" stroke-width="1"/><path d="M6 9h6" stroke="#2f5fa8" stroke-width="1.600"/></svg>
<div style="left:1832.8000000000002px;top:90px;width:1.2px;height:13.5px;background:#94989f;"></div>
<svg style="left:1839.5px;top:89.6px;" width="14.0" height="14.0" viewBox="0 0 16 16"><rect x="1.500" y="4" width="11.500" height="10" fill="#f1f6fc" stroke="#8a8f7a" stroke-width=".9"/><rect x="1.500" y="4" width="6.500" height="2" fill="#4f86d0"/><path d="M4 14c5 0 8.500-2 8.500-8" fill="none" stroke="#f3dc8a" stroke-width="1.300"/><path d="M12.500 .8l2.300 3l-2.300 3l-2.300-3z" fill="#f6d24a" stroke="#c9a02a" stroke-width=".7"/></svg>
<svg style="left:1859.5px;top:89.6px;" width="14.0" height="14.0" viewBox="0 0 16 16"><rect x="1.500" y="5" width="11" height="9.500" fill="#f1f6fc" stroke="#8aa3d0" stroke-width=".9"/><rect x="1.500" y="5" width="7" height="2.300" fill="#4f86d0"/><path d="M8 9l4.500-5.500l2.500 2l-4.500 4.500z" fill="#9aa2b0" stroke="#7a8294" stroke-width=".6"/><path d="M12 2l3.500 3" stroke="#7a8294" stroke-width="1.300"/></svg>
<svg style="left:1884.5px;top:90.6px;" width="4" height="11.6" viewBox="0 0 4 11.600"><circle cx="2" cy="1.800" r="1.300" fill="#fff" stroke="#6e6e6e" stroke-width=".8"/><circle cx="2" cy="5.800" r="1.300" fill="#fff" stroke="#6e6e6e" stroke-width=".8"/><circle cx="2" cy="9.800" r="1.300" fill="#fff" stroke="#6e6e6e" stroke-width=".8"/></svg>
<svg style="left:1628.5px;top:132.1px;" width="12.6" height="8" viewBox="0 0 16 10"><text x="0" y="8.300" font-size="9" font-family="Liberation Sans,sans-serif" font-weight="700" fill="#5a6c8c" letter-spacing="-.2">(x)</text><path d="M11.300 4.200h4M11.300 6.400h4" stroke="#6a7c9c" stroke-width="1.100"/></svg>
<svg style="left:1628.5px;top:150.47px;" width="12.6" height="8" viewBox="0 0 16 10"><text x="0" y="8.300" font-size="9" font-family="Liberation Sans,sans-serif" font-weight="700" fill="#5a6c8c" letter-spacing="-.2">(x)</text><path d="M11.300 4.200h4M11.300 6.400h4" stroke="#6a7c9c" stroke-width="1.100"/></svg>
<svg style="left:1628.5px;top:168.84px;" width="12.6" height="8" viewBox="0 0 16 10"><text x="0" y="8.300" font-size="9" font-family="Liberation Sans,sans-serif" font-weight="700" fill="#5a6c8c" letter-spacing="-.2">(x)</text><path d="M11.300 4.200h4M11.300 6.400h4" stroke="#6a7c9c" stroke-width="1.100"/></svg>
<svg style="left:1628.5px;top:187.20999999999998px;" width="12.6" height="8" viewBox="0 0 16 10"><text x="0" y="8.300" font-size="9" font-family="Liberation Sans,sans-serif" font-weight="700" fill="#5a6c8c" letter-spacing="-.2">(x)</text><path d="M11.300 4.200h4M11.300 6.400h4" stroke="#6a7c9c" stroke-width="1.100"/></svg>
<svg style="left:1628.5px;top:205.57999999999998px;" width="12.6" height="8" viewBox="0 0 16 10"><text x="0" y="8.300" font-size="9" font-family="Liberation Sans,sans-serif" font-weight="700" fill="#5a6c8c" letter-spacing="-.2">(x)</text><path d="M11.300 4.200h4M11.300 6.400h4" stroke="#6a7c9c" stroke-width="1.100"/></svg>
<svg style="left:1628.5px;top:223.95px;" width="12.6" height="8" viewBox="0 0 16 10"><text x="0" y="8.300" font-size="9" font-family="Liberation Sans,sans-serif" font-weight="700" fill="#5a6c8c" letter-spacing="-.2">(x)</text><path d="M11.300 4.200h4M11.300 6.400h4" stroke="#6a7c9c" stroke-width="1.100"/></svg>
<svg style="left:1628.5px;top:242.32px;" width="12.6" height="8" viewBox="0 0 16 10"><text x="0" y="8.300" font-size="9" font-family="Liberation Sans,sans-serif" font-weight="700" fill="#5a6c8c" letter-spacing="-.2">(x)</text><path d="M11.300 4.200h4M11.300 6.400h4" stroke="#6a7c9c" stroke-width="1.100"/></svg>
<svg style="left:1628.5px;top:260.69px;" width="12.6" height="8" viewBox="0 0 16 10"><text x="0" y="8.300" font-size="9" font-family="Liberation Sans,sans-serif" font-weight="700" fill="#5a6c8c" letter-spacing="-.2">(x)</text><path d="M11.300 4.200h4M11.300 6.400h4" stroke="#6a7c9c" stroke-width="1.100"/></svg>
<svg style="left:1628.5px;top:279.06px;" width="12.6" height="8" viewBox="0 0 16 10"><text x="0" y="8.300" font-size="9" font-family="Liberation Sans,sans-serif" font-weight="700" fill="#5a6c8c" letter-spacing="-.2">(x)</text><path d="M11.300 4.200h4M11.300 6.400h4" stroke="#6a7c9c" stroke-width="1.100"/></svg>
<svg style="left:1628.5px;top:297.43px;" width="12.6" height="8" viewBox="0 0 16 10"><text x="0" y="8.300" font-size="9" font-family="Liberation Sans,sans-serif" font-weight="700" fill="#5a6c8c" letter-spacing="-.2">(x)</text><path d="M11.300 4.200h4M11.300 6.400h4" stroke="#6a7c9c" stroke-width="1.100"/></svg>
<svg style="left:1628.5px;top:315.8px;" width="12.6" height="8" viewBox="0 0 16 10"><text x="0" y="8.300" font-size="9" font-family="Liberation Sans,sans-serif" font-weight="700" fill="#5a6c8c" letter-spacing="-.2">(x)</text><path d="M11.300 4.200h4M11.300 6.400h4" stroke="#6a7c9c" stroke-width="1.100"/></svg>
<svg style="left:1628.5px;top:334.17px;" width="12.6" height="8" viewBox="0 0 16 10"><text x="0" y="8.300" font-size="9" font-family="Liberation Sans,sans-serif" font-weight="700" fill="#5a6c8c" letter-spacing="-.2">(x)</text><path d="M11.300 4.200h4M11.300 6.400h4" stroke="#6a7c9c" stroke-width="1.100"/></svg>
<div style="left:1607px;top:344.4px;width:277px;height:0.8px;background:#ffffff;"></div>
<div style="left:1609.5px;top:345.2px;width:279.5px;height:4.8px;background:#f0f0f0;"></div>
<svg style="left:1611.5px;top:495px;" width="10.5" height="12" viewBox="0 0 12 13"><rect x=".5" y=".5" width="4" height="4" fill="#fff" stroke="#2f6ab8" stroke-width="1"/><rect x=".5" y="8.500" width="4" height="4" fill="#fff" stroke="#2f6ab8" stroke-width="1"/><path d="M6.500 1.500h4M6.500 4h5M6.500 9.500h4M6.500 12h5" stroke="#2f6ab8" stroke-width="1.200"/><rect x="5.500" y="5.500" width="3" height="2" fill="#2f6ab8"/></svg>
<svg style="left:1674.8px;top:496.5px;" width="9.4" height="8.8" viewBox="0 0 10 10"><path d="M.6 2.600L2.600 .6L5 3L7.400 .6L9.400 2.600L7 5L9.400 7.400L7.400 9.400L5 7L2.600 9.400L.6 7.400L3 5Z" fill="#ffffff" stroke="#858585" stroke-width=".95" stroke-linejoin="round"/></svg>
<svg style="left:1692.6px;top:497px;" width="12.5" height="8" viewBox="0 0 13 8"><path d="M0 1h3M4 1h3M8 1h5M0 4h12M0 7h9" stroke="#8fa9d8" stroke-width="1.300"/></svg>
<svg style="left:1864.6px;top:494px;" width="9" height="3.6" viewBox="0 0 9 3.600"><rect x=".5" y=".5" width="8" height="2.600" fill="#fdfdfd" stroke="#777" stroke-width=".9"/></svg>
<svg style="left:1882.8px;top:494px;" width="9" height="8.3" viewBox="0 0 9 8.300"><rect x=".5" y=".5" width="8" height="7.300" fill="#fdfdfd" stroke="#7a7a7a" stroke-width=".9"/><rect x=".5" y=".5" width="8" height="1.600" fill="#8a8a8a"/></svg>
<svg style="left:1767.2px;top:515.3px;" width="14.0" height="14.0" viewBox="0 0 16 16"><rect x="2" y="2.500" width="10" height="9" rx="1" fill="#dfe9f7" stroke="#8ea4c8" stroke-width="1"/><rect x="4" y="4.500" width="10" height="9" rx="1" fill="#f4f8fd" stroke="#6f8fc0" stroke-width="1"/><path d="M6 9h6" stroke="#2f5fa8" stroke-width="1.600"/></svg>
<svg style="left:1784.7px;top:515.3px;" width="14.0" height="14.0" viewBox="0 0 16 16"><path d="M3.200 2v11M1.200 10.500l2 2.500l2-2.500" fill="none" stroke="#4a5a7a" stroke-width="1"/><text x="6" y="7.500" font-size="10" font-weight="700" font-family="Liberation Sans,sans-serif" fill="#2a9a7a">a</text><text x="9.500" y="15.500" font-size="11" font-weight="700" font-family="Liberation Sans,sans-serif" fill="#a42aa8">z</text></svg>
<svg style="left:1803.5px;top:515.3px;" width="14.0" height="14.0" viewBox="0 0 16 16"><circle cx="8.500" cy="7.500" r="4" fill="#56aee8" stroke="#3a96dc" stroke-width=".8"/><path d="M8.500 5.500v4M6.800 7.500h3.400" stroke="#e8f4fc" stroke-width="1.200"/><path d="M2.500 1.500L14 14" stroke="#2a3f9a" stroke-width="1.300"/></svg>
<svg style="left:1821.3px;top:515.3px;" width="14.0" height="14.0" viewBox="0 0 16 16"><circle cx="6.500" cy="10" r="2.800" fill="#a0a0a8" stroke="#7a7a86" stroke-width=".8"/><path d="M1.500 5L12.500 15.500" stroke="#2a3f9a" stroke-width="1.300"/><text x="10" y="7.500" font-size="10" font-weight="700" font-family="Liberation Sans,sans-serif" fill="#e23a52">s</text></svg>
<svg style="left:1843.4px;top:518.5px;" width="7.2" height="7.2" viewBox="0 0 7.200 7.200"><circle cx="3.600" cy="3.600" r="3" fill="#5ab86a" stroke="#3a9a4a" stroke-width=".9"/><circle cx="3.600" cy="3.300" r="1.300" fill="#8fd69a"/></svg>
<svg style="left:1860.3px;top:516.2px;" width="10.5" height="10.5" viewBox="0 0 14 14"><path d="M4.500 1v12M9 1v12M1 4.800h12M1 9h12M2 2l10 10M12 2L2 12" stroke="#111" stroke-width="1.300"/></svg>
<svg style="left:1884px;top:516.6px;" width="4" height="11.6" viewBox="0 0 4 11.600"><circle cx="2" cy="1.800" r="1.300" fill="#fff" stroke="#6e6e6e" stroke-width=".8"/><circle cx="2" cy="5.800" r="1.300" fill="#fff" stroke="#6e6e6e" stroke-width=".8"/><circle cx="2" cy="9.800" r="1.300" fill="#fff" stroke="#6e6e6e" stroke-width=".8"/></svg>
<svg style="left:1632px;top:536.0px;" width="9" height="8.5" viewBox="0 0 9 8.500"><rect x=".5" y=".5" width="3" height="3.500" fill="#2f6ab8"/><rect x="4.500" y=".5" width="4" height="7.500" fill="#2f6ab8"/><rect x=".5" y="5" width="3" height="3" fill="#6f9ad8"/></svg>
<svg style="left:1632px;top:554.5600000000001px;" width="7.6" height="7.6" viewBox="0 0 7.600 7.600"><circle cx="3.800" cy="3.800" r="3.400" fill="#3f7fc8"/><path d="M.8 3.200h6" stroke="#9fc3ee" stroke-width="1.200"/></svg>
<svg style="left:1631px;top:571.72px;" width="9" height="11" viewBox="0 0 9 11"><path d="M2 1v9M6.500 1v9M0 3.500h9M0 7.500h9" stroke="#3a9a4a" stroke-width="1" stroke-dasharray="1.300 .9"/></svg>
<svg style="left:1642.6px;top:568.72px;" width="5" height="7" viewBox="0 0 5 7"><text x="0" y="6.500" font-size="8.500" font-weight="700" font-family="Liberation Sans,sans-serif" fill="#e0343f">s</text></svg>
<svg style="left:1631px;top:590.08px;" width="9" height="11" viewBox="0 0 9 11"><path d="M2 1v9M6.500 1v9M0 3.500h9M0 7.500h9" stroke="#3a9a4a" stroke-width="1" stroke-dasharray="1.300 .9"/></svg>
<svg style="left:1642.6px;top:587.08px;" width="5" height="7" viewBox="0 0 5 7"><text x="0" y="6.500" font-size="8.500" font-weight="700" font-family="Liberation Sans,sans-serif" fill="#e0343f">s</text></svg>
<svg style="left:1632.8px;top:610.24px;" width="6.6" height="6.6" viewBox="0 0 7.200 7.200"><circle cx="3.600" cy="3.600" r="3" fill="#5ab86a" stroke="#3a9a4a" stroke-width=".9"/><circle cx="3.600" cy="3.300" r="1.300" fill="#8fd69a"/></svg>
<svg style="left:1642.6px;top:605.44px;" width="5" height="7" viewBox="0 0 5 7"><text x="0" y="6.500" font-size="8.500" font-weight="700" font-family="Liberation Sans,sans-serif" fill="#e0343f">s</text></svg>
<svg style="left:1632.8px;top:628.5999999999999px;" width="6.6" height="6.6" viewBox="0 0 7.200 7.200"><circle cx="3.600" cy="3.600" r="3" fill="#5ab86a" stroke="#3a9a4a" stroke-width=".9"/><circle cx="3.600" cy="3.300" r="1.300" fill="#8fd69a"/></svg>
<svg style="left:1642.6px;top:623.8px;" width="5" height="7" viewBox="0 0 5 7"><text x="0" y="6.500" font-size="8.500" font-weight="700" font-family="Liberation Sans,sans-serif" fill="#e0343f">s</text></svg>
<svg style="left:1632.8px;top:646.9599999999999px;" width="6.6" height="6.6" viewBox="0 0 7.200 7.200"><circle cx="3.600" cy="3.600" r="3" fill="#5ab86a" stroke="#3a9a4a" stroke-width=".9"/><circle cx="3.600" cy="3.300" r="1.300" fill="#8fd69a"/></svg>
<svg style="left:1632.8px;top:665.3199999999999px;" width="6.6" height="6.6" viewBox="0 0 7.200 7.200"><circle cx="3.600" cy="3.600" r="3" fill="#5ab86a" stroke="#3a9a4a" stroke-width=".9"/><circle cx="3.600" cy="3.300" r="1.300" fill="#8fd69a"/></svg>
<div style="left:506.5px;top:772.5px;width:1382.5px;height:231.5px;background:#ffffff;border-radius:6px 0 0 0;"></div>
<div style="left:506.5px;top:772.5px;width:1382.5px;height:24.5px;background:#f4f6fc;border-radius:6px 0 0 0;"></div>
<div style="left:506.5px;top:772.5px;width:86.0px;height:25.0px;background:linear-gradient(#d8e1ed,#eef2f8 50%,#ffffff 95%);border-radius:6px 7px 0 0;"></div>
<span class="u" style="left:526px;top:777.13px;font-size:13.2px;line-height:17px;color:#1c1c1c;transform:scaleX(0.9506);">Console</span>
<span class="u" style="left:612.3px;top:777.13px;font-size:13.2px;line-height:17px;color:#a0a0a0;transform:scaleX(0.9640);">Registers</span>
<span class="u" style="left:689.7px;top:777.13px;font-size:13.2px;line-height:17px;color:#a0a0a0;transform:scaleX(0.9838);">Problems</span>
<span class="u" style="left:768px;top:777.13px;font-size:13.2px;line-height:17px;color:#a0a0a0;transform:scaleX(0.9521);">Executables</span>
<span class="u" style="left:860.2px;top:777.13px;font-size:13.2px;line-height:17px;color:#a0a0a0;transform:scaleX(0.9686);">Debug Shell</span>
<span class="u" style="left:953.9px;top:777.13px;font-size:13.2px;line-height:17px;color:#a0a0a0;transform:scaleX(0.9953);">Watch registers</span>
<span class="u" style="left:1068px;top:777.13px;font-size:13.2px;line-height:17px;color:#a0a0a0;transform:scaleX(0.9910);">Debugger Console</span>
<span class="u" style="left:1201px;top:777.13px;font-size:13.2px;line-height:17px;color:#a0a0a0;transform:scaleX(0.9803);">Memory Spaces</span>
<span class="u" style="left:1317.7px;top:777.13px;font-size:13.2px;line-height:17px;color:#a0a0a0;transform:scaleX(1.0352);">Memory</span>
<span class="u" style="left:509px;top:798.03px;font-size:12.6px;line-height:16px;color:#111;transform:scaleX(0.9252);">FlexEvan_IFB_APP_GHS_Debug_FLASH_PNE</span>
<span class="u" style="left:762.6px;top:798.03px;font-size:12.6px;line-height:16px;color:#111;transform:scaleX(1.0134);">[GDB PEMicro Interface Debugging]</span>
<span class="u" style="left:972.4px;top:798.03px;font-size:12.6px;line-height:16px;color:#111;transform:scaleX(1.0467);">C:\NXP\S32DS.3.4\eclipse\plugins\com.pemicro.debug.gdbjtag.pne_5.1.7.202112141853\win32\pegdbserver_console</span>
<div style="left:509px;top:813.7px;width:1380px;height:1.1px;background:#9a9a9a;"></div>
<span class="m" style="left:510.2px;top:814.50px;font-size:12px;line-height:16px;color:#000;">REM Initialize DMA TCD:</span>
<span class="m" style="left:510.2px;top:830.50px;font-size:12px;line-height:16px;color:#000;">REM Copy valid executable code to RAM for each core to be used.</span>
<span class="m" style="left:510.2px;top:846.50px;font-size:12px;line-height:16px;color:#000;">REM Enable required cores in MC_ME:</span>
<span class="m" style="left:510.2px;top:862.50px;font-size:12px;line-height:16px;color:#000;">Delaying for 20mS ...</span>
<span class="m" style="left:510.2px;top:878.50px;font-size:12px;line-height:16px;color:#000;">Done.</span>
<span class="m" style="left:510.2px;top:910.50px;font-size:12px;line-height:16px;color:#000;">Reset script (C:\NXP\S32DS.3.4\eclipse\plugins\com.pemicro.debug.gdbjtag.pne_5.1.7.202112141853\win32\gdi\P&amp;E\supportFiles_ARM\NXP\S32K3xx\S32K314.mac) completed.</span>
<span class="m" style="left:510.2px;top:942.50px;font-size:12px;line-height:16px;color:#000;">UsageFault: The processor has attempted to execute an undefined instruction.</span>
<span class="m" style="left:510.2px;top:958.50px;font-size:12px;line-height:16px;color:#000;">HardFault: A fault has been escalated to a hard fault.</span>
<div style="left:1884px;top:815px;width:5px;height:175px;background:#f0f0f0;"></div>
<div style="left:508.6px;top:990px;width:1380.4px;height:14px;background:#f0f0f0;"></div>
<div style="left:525.3px;top:996px;width:1002.2px;height:4.7px;background:#8b8b8b;"></div>
<svg style="left:510.3px;top:780.3px;" width="12.5" height="12.5" viewBox="0 0 16 16"><rect x="1.300" y="1.800" width="13.400" height="10" rx="1.300" fill="#f4f7fc" stroke="#2a5cb4" stroke-width="1.700"/><rect x="3.800" y="4.300" width="8" height="1.300" fill="#5a7fc8"/><rect x="3.800" y="6.800" width="8" height="1.300" fill="#5a7fc8"/><path d="M5 12.500h6v2.300H5z" fill="#2a5cb4"/></svg>
<svg style="left:578.8px;top:782.5px;" width="9.4" height="8.8" viewBox="0 0 10 10"><path d="M.6 2.600L2.600 .6L5 3L7.400 .6L9.400 2.600L7 5L9.400 7.400L7.400 9.400L5 7L2.600 9.400L.6 7.400L3 5Z" fill="#ffffff" stroke="#858585" stroke-width=".95" stroke-linejoin="round"/></svg>
<svg style="left:597px;top:780px;" width="12" height="10" viewBox="0 0 13 11"><path d="M1.500 .5v4M4.800 .5v4M8.100 .5v4M11.400 .5v4M1.500 6.500v4M4.800 6.500v4M8.100 6.500v4M11.400 6.500v4" stroke="#a9bfdc" stroke-width="1.500" stroke-dasharray="2.300 .8"/></svg>
<svg style="left:673px;top:779.8px;" width="14.0" height="14.0" viewBox="0 0 16 16"><rect x="1.500" y="1.500" width="12.500" height="13" fill="#f4f4f4" stroke="#cfcfcf" stroke-width=".8"/><circle cx="7" cy="4.500" r="2.800" fill="#e87a80"/><path d="M3 14.500l3-5.500l3 5.500z" fill="#f2d9a0" stroke="#dcc07a" stroke-width=".5"/><path d="M10.500 6v8" stroke="#d0d0d0" stroke-width="1.500"/></svg>
<svg style="left:752px;top:779.8px;" width="14.0" height="14.0" viewBox="0 0 16 16"><circle cx="8" cy="8" r="6.500" fill="#b9cdee" stroke="#a3bbe6" stroke-width=".8"/><path d="M6 4.300L11.500 8L6 11.700Z" fill="#fff"/></svg>
<svg style="left:844px;top:779.8px;" width="14.0" height="14.0" viewBox="0 0 16 16"><rect x="2.500" y="1.500" width="10" height="12.500" rx="1" fill="#fbfbf6" stroke="#b9b39a" stroke-width=".9"/><text x="5.300" y="11" font-size="8.500" font-weight="700" font-family="Liberation Sans,sans-serif" fill="#8fa0c8">J</text><path d="M9 14.500l4-2" stroke="#8fc89a" stroke-width="1.300"/></svg>
<svg style="left:938px;top:780px;" width="12" height="10" viewBox="0 0 13 11"><path d="M1.500 .5v4M4.800 .5v4M8.100 .5v4M11.400 .5v4M1.500 6.500v4M4.800 6.500v4M8.100 6.500v4M11.400 6.500v4" stroke="#a9bfdc" stroke-width="1.500" stroke-dasharray="2.300 .8"/></svg>
<svg style="left:1053.5px;top:779.8px;" width="14.0" height="14.0" viewBox="0 0 16 16"><rect x="1" y="1.500" width="12.500" height="10.500" fill="#eef3fb" stroke="#7f9acb" stroke-width="1.100"/><rect x="1" y="1.500" width="12.500" height="2.300" fill="#8fa9d8"/><path d="M3.500 6.500h5M3.500 9h4" stroke="#9fb5dc" stroke-width="1"/><circle cx="11.500" cy="12" r="3" fill="#8fcf9a" stroke="#6fb87a" stroke-width=".6"/><path d="M8 8l4 4" stroke="#7fbf8a" stroke-width="1.200"/></svg>
<svg style="left:1189.8px;top:780.3px;" width="8" height="13" viewBox="0 0 8.500 14"><rect x="1" y=".8" width="6.500" height="12.500" rx="1.800" fill="#dfe8f8" stroke="#8fa9dc" stroke-width="1.200"/><rect x="2.500" y="3" width="3.500" height="8" fill="#f4f7fc"/></svg>
<svg style="left:1305.3px;top:780.3px;" width="8" height="13" viewBox="0 0 8.500 14"><rect x="1" y=".8" width="6.500" height="12.500" rx="1.800" fill="#dfe8f8" stroke="#8fa9dc" stroke-width="1.200"/><rect x="2.500" y="3" width="3.500" height="8" fill="#f4f7fc"/></svg>
<svg style="left:1618px;top:778.9px;" width="9.2" height="9.2" viewBox="0 0 9.200 9.200"><rect x=".6" y=".6" width="8" height="8" rx=".8" fill="#ea2127" stroke="#f0666a" stroke-width="1"/></svg>
<svg style="left:1634.1px;top:776.6px;" width="14.0" height="14.0" viewBox="0 0 16 16"><path d="M3 3l10 10M13 3l-10 10" stroke="#a9a9a9" stroke-width="4"/></svg>
<svg style="left:1652.3px;top:776.6px;" width="14.0" height="14.0" viewBox="0 0 16 16"><path d="M5 6l8.500 8.500M13.500 6l-8.500 8.500" stroke="#adadad" stroke-width="3.600"/><path d="M2 2l6 6M8 2l-6 6" stroke="#cbcbcb" stroke-width="1.700" stroke-dasharray="1.500 .8"/><path d="M9 1.500l5 5" stroke="#cbcbcb" stroke-width="1.500" stroke-dasharray="1.500 .8"/></svg>
<div style="left:1669.8000000000002px;top:776px;width:1.2px;height:14.3px;background:#94989f;"></div>
<svg style="left:1677.2px;top:776.6px;" width="14.0" height="14.0" viewBox="0 0 16 16"><path d="M1.500 1.500h7l2.500 2.500v9.500h-9.500z" fill="#fdfcf4" stroke="#b9ac7a" stroke-width=".9"/><path d="M3.500 5h5M3.500 7h5M3.500 9h4" stroke="#6f8fc8" stroke-width=".9"/><path d="M9 9.500l5.500 5.500M14.500 9.500L9 15" stroke="#6a6a6a" stroke-width="1.900"/></svg>
<svg style="left:1695.7px;top:776.6px;" width="14.0" height="14.0" viewBox="0 0 16 16"><rect x="7" y="1.500" width="8" height="12.500" fill="#f4f7fc" stroke="#7f9acb" stroke-width=".9"/><path d="M12.500 3v9M11.500 4.500h2M11.500 7.500h2M11.500 10.500h2" stroke="#5a7fc8" stroke-width=".8"/><rect x="1" y="8" width="8.500" height="6.500" rx="1" fill="#e6b23c" stroke="#a87f1c" stroke-width=".8"/><path d="M3 8V6c0-3 4.500-3 4.500 0v2" fill="none" stroke="#a87f1c" stroke-width="1.400"/></svg>
<svg style="left:1714.2px;top:776.6px;" width="14.0" height="14.0" viewBox="0 0 16 16"><path d="M1.500 1.500h7l2.500 2.500v9.500h-9.500z" fill="#fdfcf4" stroke="#c9b98a" stroke-width=".9"/><path d="M3.500 5h5M3.500 7h3M3.500 9h3" stroke="#8fa9d8" stroke-width=".9"/><path d="M14.500 3.500v7h-5v-2.300L6 11l3.500 2.800v-2.300h6.500" fill="#f6d88a" stroke="#c9a04a" stroke-width=".8" stroke-linejoin="round"/></svg>
<div style="left:1730px;top:774.3px;width:18.6px;height:16.6px;background:#cde6fb;border:1px solid #7cbcf0;border-radius:2.5px;"></div>
<div style="left:1748.4px;top:774.3px;width:18.6px;height:16.6px;background:#cde6fb;border:1px solid #7cbcf0;border-radius:2.5px;"></div>
<svg style="left:1732.3px;top:776.6px;" width="14.0" height="14.0" viewBox="0 0 16 16"><rect x="4.500" y="1.500" width="10.500" height="8" rx="1" fill="#eef3fb" stroke="#4f7fc8" stroke-width="1.200"/><path d="M7 4h5.500M7 6.300h4" stroke="#8fa9d8" stroke-width=".9"/><rect x="1" y="6" width="7.500" height="6" rx="1" fill="#f4f7fc" stroke="#2f5fb0" stroke-width="1.200"/><path d="M3 14.500h4M5 12v2.500" stroke="#2f5fb0" stroke-width="1.200"/></svg>
<svg style="left:1750.7px;top:776.6px;" width="14.0" height="14.0" viewBox="0 0 16 16"><rect x="4.500" y="1.500" width="10.500" height="8" rx="1" fill="#eef3fb" stroke="#4f7fc8" stroke-width="1.200"/><path d="M7.500 3.500l3.500 4M11 3.500l-3.500 4" stroke="#e0343f" stroke-width="1.500"/><rect x="12" y="4" width="1.500" height="2" fill="#e0343f"/><rect x="1" y="6" width="7.500" height="6" rx="1" fill="#f4f7fc" stroke="#2f5fb0" stroke-width="1.200"/><path d="M3 14.500h4M5 12v2.500" stroke="#2f5fb0" stroke-width="1.200"/></svg>
<div style="left:1768.3000000000002px;top:776px;width:1.2px;height:14.3px;background:#94989f;"></div>
<svg style="left:1775.9px;top:776.4px;" width="14.0" height="14.0" viewBox="0 0 16 16"><rect x="1.500" y="5.500" width="11.500" height="9" fill="#fbfcfe" stroke="#4f7fc8" stroke-width="1"/><rect x="1.500" y="5.500" width="11.500" height="2.500" fill="#4f7fc8"/><path d="M8 7.500l5-6l2.500 2.200l-5.500 5.500z" fill="#2fa84a" stroke="#1f8a35" stroke-width=".6"/></svg>
<svg style="left:1795px;top:776.8px;" width="14.0" height="14.0" viewBox="0 0 16 16"><rect x="1.600" y="2.600" width="12.800" height="9" rx="1.200" fill="#f4f7fc" stroke="#2a5cb4" stroke-width="1.800"/><rect x="5" y="5" width="6" height="1.300" fill="#6a8fd0"/><rect x="5" y="7" width="4" height="1.300" fill="#9db6e2"/><path d="M6 12.300h4v1.300h2v1.200H4v-1.200h2z" fill="#2a5cb4"/></svg>
<svg style="left:1814px;top:780.8px;" width="8" height="6" viewBox="0 0 8 6"><path d="M0.2999999999999998 0.8999999999999999H7.7L4 5.1Z" fill="#000"/></svg>
<svg style="left:1828.4px;top:776.6px;" width="14.0" height="14.0" viewBox="0 0 16 16"><rect x="1.500" y="3.500" width="12" height="11" fill="#fdfbe8" stroke="#3f6fb8" stroke-width="1"/><rect x="1.500" y="3.500" width="12" height="2.300" fill="#4f7fc8"/><path d="M12.500 .3l1 2l2.200 .3l-1.600 1.500l.4 2.200l-2-1.100l-2 1.100l.4-2.200L9.300 2.600l2.200-.3z" fill="#f5d25a" stroke="#c9a02a" stroke-width=".6"/><path d="M9 14.500h4.500v-4" fill="none" stroke="#d8b84a" stroke-width="1.400"/></svg>
<svg style="left:1847.4px;top:780.8px;" width="8" height="6" viewBox="0 0 8 6"><path d="M0.2999999999999998 0.8999999999999999H7.7L4 5.1Z" fill="#000"/></svg>
<svg style="left:1864px;top:779.3px;" width="9" height="3.6" viewBox="0 0 9 3.600"><rect x=".5" y=".5" width="8" height="2.600" fill="#fdfdfd" stroke="#777" stroke-width=".9"/></svg>
<svg style="left:1882.4px;top:779.3px;" width="9" height="8.3" viewBox="0 0 9 8.300"><rect x=".5" y=".5" width="8" height="7.300" fill="#fdfdfd" stroke="#7a7a7a" stroke-width=".9"/><rect x=".5" y=".5" width="8" height="1.600" fill="#8a8a8a"/></svg>
</body></html>
